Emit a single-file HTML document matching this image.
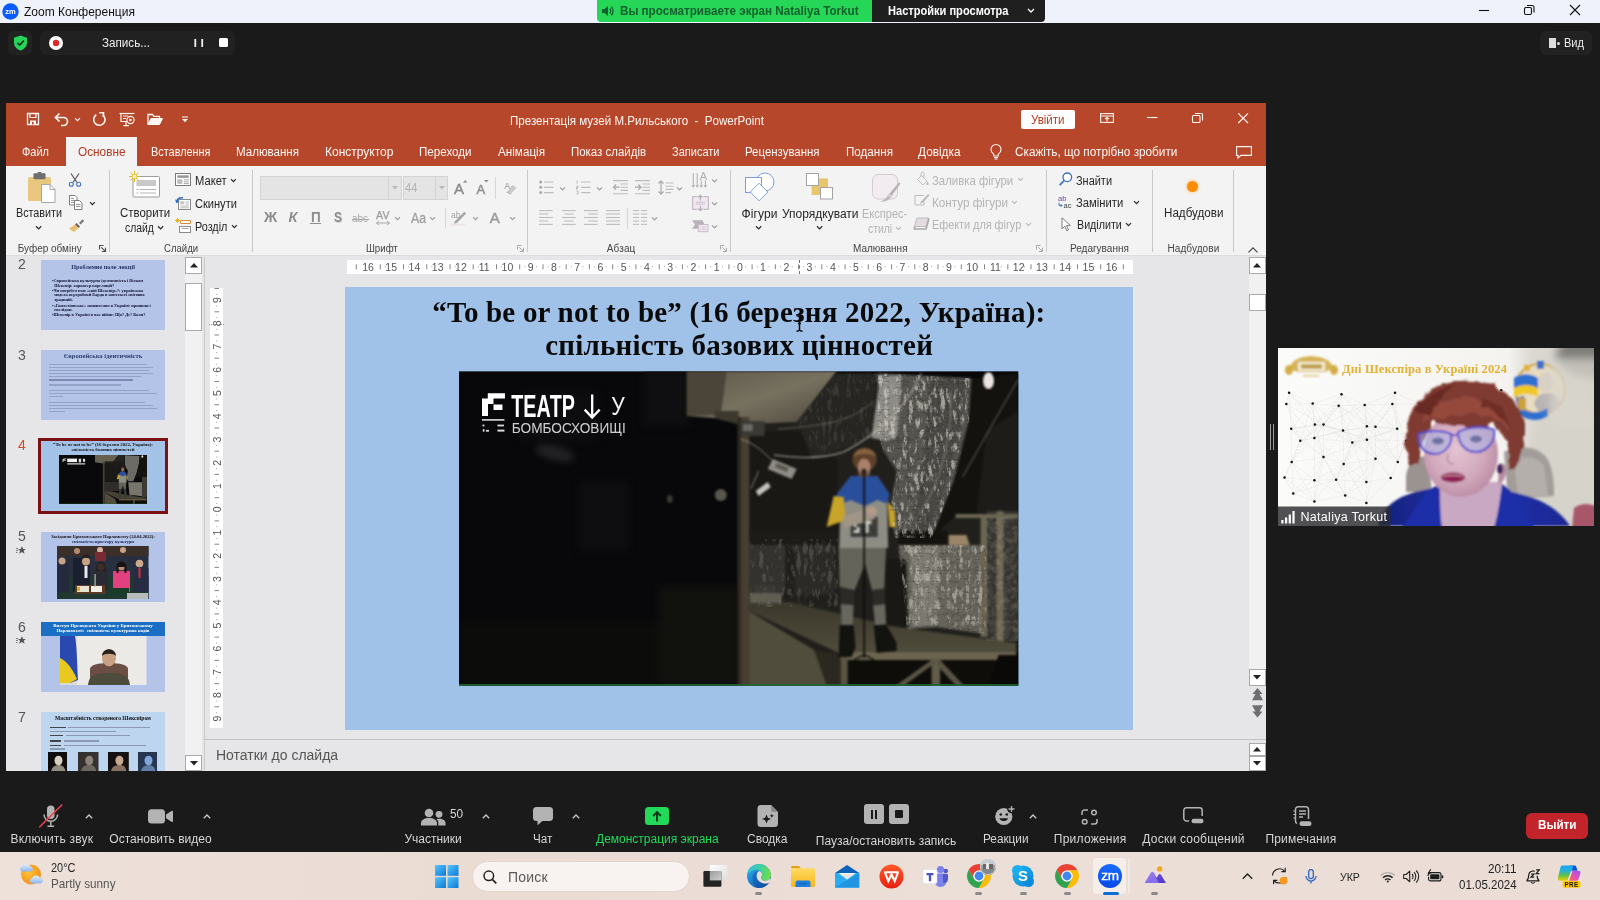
<!DOCTYPE html>
<html>
<head>
<meta charset="utf-8">
<style>
*{box-sizing:border-box;margin:0;padding:0}
html,body{width:1600px;height:900px;overflow:hidden;background:#1a1a1a;font-family:"Liberation Sans",sans-serif;}
.abs{position:absolute}
#root{position:absolute;left:0;top:0;width:1600px;height:900px;overflow:hidden;background:#1a1a1a;filter:opacity(1)}
.t{position:absolute;white-space:pre;line-height:1}
svg{overflow:visible}
</style>
</head>
<body>
<div id="root">

<!-- ZOOMTOP -->

<div class="abs" style="left:0px;top:0px;width:1600px;height:23px;background:#eff2fa;"></div>
<svg class="abs" style="left:2px;top:3px;" width="17" height="17" viewBox="0 0 17 17"><circle cx="8.5" cy="8.5" r="8.2" fill="#0b5cff"/><text x="8.5" y="11" font-family="Liberation Sans" font-weight="bold" font-size="7.5" fill="#fff" text-anchor="middle">zm</text></svg>
<div class="t" style="left:24.0px;top:5.6px;font-size:12px;color:#111;">Zoom Конференция</div>
<div class="abs" style="left:597px;top:0px;width:275px;height:22px;background:#26d657;border-radius:0 0 0 4px"></div>
<div class="abs" style="left:872px;top:0px;width:173px;height:22px;background:#1f1f1f;border-radius:0 0 4px 0"></div>
<svg class="abs" style="left:601px;top:5px;" width="14" height="12" viewBox="0 0 14 12"><path d="M1 4h2.500L7 1v10L3.500 8H1z" fill="#14602c"/><path d="M8.700 3.500a3.500 3.500 0 0 1 0 5M10.300 1.800a6 6 0 0 1 0 8.400" fill="none" stroke="#14602c" stroke-width="1.300"/></svg>
<div class="t" style="left:619.5px;top:4.9px;font-size:12px;color:#15602d;transform:scaleX(0.9697);transform-origin:0 50%;font-weight:bold;">Вы просматриваете экран Nataliya Torkut</div>
<div class="t" style="left:888.0px;top:4.9px;font-size:12px;color:#fff;transform:scaleX(0.9219);transform-origin:0 50%;font-weight:bold;">Настройки просмотра</div>
<svg class="abs" style="left:1027px;top:8px;" width="8" height="6" viewBox="0 0 8 6"><path d="M1 1l3 3 3-3" fill="none" stroke="#fff" stroke-width="1.300"/></svg>
<svg class="abs" style="left:1476px;top:3px;" width="110" height="16" viewBox="0 0 110 16"><path d="M3 7.500h10" stroke="#111" stroke-width="1.100" fill="none"/><rect x="48.500" y="4.500" width="7" height="7" rx="1.500" fill="none" stroke="#111" stroke-width="1.100"/><path d="M51 2.500h5a2 2 0 0 1 2 2v5" fill="none" stroke="#111" stroke-width="1.100"/><path d="M94 2l10 10M104 2l-10 10" stroke="#111" stroke-width="1.100" fill="none"/></svg>
<div class="abs" style="left:8px;top:31px;width:24px;height:24px;background:#222;border-radius:5px"></div>
<svg class="abs" style="left:13px;top:35px;" width="15" height="16" viewBox="0 0 15 16"><path d="M7.500 0.500L14 2.800v4.700c0 4-2.800 6.800-6.500 8C3.800 14.300 1 11.500 1 7.500V2.800z" fill="#27d45a"/><path d="M4.300 7.800l2.300 2.300 4.200-4.400" fill="none" stroke="#103a1c" stroke-width="1.700"/></svg>
<div class="abs" style="left:40px;top:31px;width:195px;height:24px;background:#212121;border-radius:6px"></div>
<svg class="abs" style="left:48px;top:35px;" width="16" height="16" viewBox="0 0 16 16"><circle cx="8" cy="8" r="7" fill="#fff"/><circle cx="8" cy="8" r="3.200" fill="#e02828"/></svg>
<div class="t" style="left:102.0px;top:37.1px;font-size:12px;color:#f0f0f0;transform:scaleX(0.9721);transform-origin:0 50%;">Запись...</div>
<svg class="abs" style="left:194px;top:39px;" width="10" height="8" viewBox="0 0 10 8"><rect x="0.400" y="0" width="1.800" height="8" fill="#f0f0f0"/><rect x="7.300" y="0" width="1.800" height="8" fill="#f0f0f0"/></svg>
<div class="abs" style="left:219px;top:38px;width:9px;height:9px;background:#fff;border-radius:1.500px"></div>
<div class="abs" style="left:1540px;top:31px;width:52px;height:24px;background:#222;border-radius:6px"></div>
<div class="abs" style="left:1549px;top:38px;width:7px;height:10px;background:#ddd;"></div>
<div class="abs" style="left:1557px;top:42px;width:3px;height:3px;background:#ddd;border-radius:50%"></div>
<div class="t" style="left:1564.0px;top:37.1px;font-size:12px;color:#ececec;transform:scaleX(0.9212);transform-origin:0 50%;">Вид</div>

<!-- PPHEAD -->

<div class="abs" style="left:6px;top:103px;width:1260px;height:668px;background:#e6e6e6;"></div>
<div class="abs" style="left:6px;top:103px;width:1260px;height:63px;background:#b7472a;"></div>
<svg class="abs" style="left:26px;top:112px;" width="14" height="14" viewBox="0 0 14 14"><path d="M1.500 1.500h11v11h-11z" fill="none" stroke="#fdf6f3" stroke-width="1.300"/><path d="M4 1.500v4h6v-4" fill="none" stroke="#fdf6f3" stroke-width="1.200"/><path d="M4 12.500v-4h6v4z" fill="#fdf6f3"/><rect x="6" y="9.800" width="1.500" height="2.700" fill="#b7472a"/></svg>
<svg class="abs" style="left:54px;top:112px;" width="16" height="15" viewBox="0 0 16 15"><path d="M1.500 5.500h8a4 4 0 0 1 0 8h-2.500" fill="none" stroke="#fdf6f3" stroke-width="1.700"/><path d="M5.500 1.500l-4 4 4 4" fill="none" stroke="#fdf6f3" stroke-width="1.700"/></svg>
<svg class="abs" style="left:74.0px;top:117.0px;" width="7.0" height="5.0" viewBox="0 0 7.0 5.0"><path d="M1 1.2l2.5 2.5 2.5-2.5" fill="none" stroke="#fdf6f3" stroke-width="1.1"/></svg>
<svg class="abs" style="left:92px;top:112px;" width="15" height="15" viewBox="0 0 15 15"><path d="M4.300 2.800a5.700 5.700 0 1 0 6.400 0.200" fill="none" stroke="#fdf6f3" stroke-width="1.600"/><path d="M7.200 0.800h4.300v4.300" fill="none" stroke="#fdf6f3" stroke-width="1.600"/></svg>
<svg class="abs" style="left:119px;top:112px;" width="17" height="15" viewBox="0 0 17 15"><path d="M0.500 1.500h15" stroke="#fdf6f3" stroke-width="1.200"/><path d="M2 1.500v8h6" fill="none" stroke="#fdf6f3" stroke-width="1.200"/><path d="M4 4h5M4 6.500h3" stroke="#fdf6f3" stroke-width="1"/><circle cx="11.500" cy="8" r="3.600" fill="none" stroke="#fdf6f3" stroke-width="1.100"/><path d="M10.400 6.200v3.600l3-1.800z" fill="#fdf6f3"/><path d="M7 10v3M4.500 13.700h5.500" stroke="#fdf6f3" stroke-width="1.200"/></svg>
<svg class="abs" style="left:147px;top:112px;" width="17" height="14" viewBox="0 0 17 14"><path d="M1 12.500v-10h4.500l1.500 1.800h5.500v2.200" fill="none" stroke="#fdf6f3" stroke-width="1.300"/><path d="M1 12.500l3-6h11.500l-3 6z" fill="#fdf6f3" stroke="#fdf6f3" stroke-width="1" stroke-linejoin="round"/></svg>
<svg class="abs" style="left:181px;top:116px;" width="8" height="7" viewBox="0 0 8 7"><path d="M1 1h6" stroke="#fdf6f3" stroke-width="1.100"/><path d="M1 3h6l-3 3.200z" fill="#fdf6f3"/></svg>
<div class="t" style="left:509.5px;top:114.6px;font-size:12px;color:#fdf6f3;transform:scaleX(0.9645);transform-origin:0 50%;">Презентація музей М.Рильського  -  PowerPoint</div>
<div class="abs" style="left:1021px;top:110px;width:54px;height:19px;background:#fff;border-radius:2px"></div>
<div class="t" style="left:1031.0px;top:114.1px;font-size:12px;color:#b23c22;transform:scaleX(0.9601);transform-origin:0 50%;">Увійти</div>
<svg class="abs" style="left:1100px;top:113px;" width="14" height="10" viewBox="0 0 14 10"><rect x="0.600" y="0.600" width="12.800" height="8.800" fill="none" stroke="#fdf6f3" stroke-width="1.100"/><path d="M0.600 3h12.800" stroke="#fdf6f3" stroke-width="1"/><path d="M7 8.500v-4M5 6.200l2-2 2 2" fill="none" stroke="#fdf6f3" stroke-width="1.100"/></svg>
<svg class="abs" style="left:1146px;top:112px;" width="104" height="12" viewBox="0 0 104 12"><path d="M1 5.500h10.500" stroke="#fdf6f3" stroke-width="1.100"/><rect x="46.500" y="3.500" width="7.500" height="7" rx="1" fill="none" stroke="#fdf6f3" stroke-width="1.100"/><path d="M49 1.500h6.500a1 1 0 0 1 1 1v6" fill="none" stroke="#fdf6f3" stroke-width="1.100"/><path d="M92.300 1.300l9.700 9.700M102 1.300l-9.700 9.700" stroke="#fdf6f3" stroke-width="1.200"/></svg>
<div class="abs" style="left:66px;top:137px;width:71px;height:29px;background:#f3f3f3;"></div>
<div class="t" style="left:21.5px;top:146.0px;font-size:12px;color:#fdf6f3;transform:scaleX(0.9152);transform-origin:0 50%;">Файл</div>
<div class="t" style="left:77.5px;top:146.0px;font-size:12px;color:#b23c22;transform:scaleX(0.9832);transform-origin:0 50%;">Основне</div>
<div class="t" style="left:150.5px;top:146.0px;font-size:12px;color:#fdf6f3;transform:scaleX(0.9075);transform-origin:0 50%;">Вставлення</div>
<div class="t" style="left:236.0px;top:146.0px;font-size:12px;color:#fdf6f3;transform:scaleX(0.9622);transform-origin:0 50%;">Малювання</div>
<div class="t" style="left:325.0px;top:146.0px;font-size:12px;color:#fdf6f3;">Конструктор</div>
<div class="t" style="left:419.0px;top:146.0px;font-size:12px;color:#fdf6f3;transform:scaleX(0.9657);transform-origin:0 50%;">Переходи</div>
<div class="t" style="left:497.5px;top:146.0px;font-size:12px;color:#fdf6f3;transform:scaleX(0.9739);transform-origin:0 50%;">Анімація</div>
<div class="t" style="left:570.5px;top:146.0px;font-size:12px;color:#fdf6f3;transform:scaleX(0.9541);transform-origin:0 50%;">Показ слайдів</div>
<div class="t" style="left:671.5px;top:146.0px;font-size:12px;color:#fdf6f3;transform:scaleX(0.9182);transform-origin:0 50%;">Записати</div>
<div class="t" style="left:745.0px;top:146.0px;font-size:12px;color:#fdf6f3;transform:scaleX(0.9524);transform-origin:0 50%;">Рецензування</div>
<div class="t" style="left:845.5px;top:146.0px;font-size:12px;color:#fdf6f3;transform:scaleX(0.9698);transform-origin:0 50%;">Подання</div>
<div class="t" style="left:918.0px;top:146.0px;font-size:12px;color:#fdf6f3;transform:scaleX(0.9845);transform-origin:0 50%;">Довідка</div>
<div class="t" style="left:1014.8px;top:146.0px;font-size:12px;color:#fdf6f3;transform:scaleX(0.9807);transform-origin:0 50%;">Скажіть, що потрібно зробити</div>
<svg class="abs" style="left:990px;top:143.5px;" width="12" height="16" viewBox="0 0 12 16"><path d="M3.800 10.200c-1.500-1-2.800-2.600-2.800-4.700a5 5 0 0 1 10 0c0 2.100-1.300 3.700-2.800 4.700v1.800h-4.400z" fill="none" stroke="#fdf6f3" stroke-width="1.100"/><path d="M4 13.500h4M4.500 15h3" stroke="#fdf6f3" stroke-width="1"/></svg>
<svg class="abs" style="left:1236px;top:145.5px;" width="16" height="13" viewBox="0 0 16 13"><path d="M0.600 0.600h14.800v8.800h-10.400l-3 2.600v-2.600h-1.400z" fill="none" stroke="#fdf6f3" stroke-width="1.100"/></svg>

<!-- RIBBON -->

<div class="abs" style="left:6px;top:166px;width:1260px;height:90px;background:#f3f3f3;"></div>
<div class="abs" style="left:6px;top:255px;width:1260px;height:1px;background:#dcdcdc;"></div>
<div class="abs" style="left:109px;top:170px;width:1px;height:82px;background:#c8c8c8;"></div>
<div class="abs" style="left:252px;top:170px;width:1px;height:82px;background:#c8c8c8;"></div>
<div class="abs" style="left:527px;top:170px;width:1px;height:82px;background:#c8c8c8;"></div>
<div class="abs" style="left:730px;top:170px;width:1px;height:82px;background:#c8c8c8;"></div>
<div class="abs" style="left:1046px;top:170px;width:1px;height:82px;background:#c8c8c8;"></div>
<div class="abs" style="left:1152px;top:170px;width:1px;height:82px;background:#c8c8c8;"></div>
<div class="abs" style="left:1233px;top:170px;width:1px;height:82px;background:#c8c8c8;"></div>
<svg class="abs" style="left:27px;top:172px;" width="29" height="32" viewBox="0 0 29 32"><rect x="1" y="5" width="23" height="24" rx="1.500" fill="#e9c77f"/><rect x="6.500" y="1.200" width="12" height="6" rx="1" fill="#6e6e6e"/><rect x="10.500" y="0" width="4" height="3" rx="1" fill="#6e6e6e"/><path d="M14.500 12.500h8.500l5 5v13h-13.500z" fill="#fff" stroke="#a8a8a8" stroke-width="1"/><path d="M23 12.500v5h5" fill="none" stroke="#a8a8a8" stroke-width="1"/></svg>
<div class="t" style="left:16.2px;top:207.1px;font-size:12px;color:#262626;transform:scaleX(0.8964);transform-origin:0 50%;">Вставити</div>
<svg class="abs" style="left:35.199999999999996px;top:225.4px;" width="7.2" height="5.2" viewBox="0 0 7.2 5.2"><path d="M1 1.3l2.6 2.6 2.6-2.6" fill="none" stroke="#262626" stroke-width="1.2"/></svg>
<svg class="abs" style="left:68px;top:173px;" width="14" height="14" viewBox="0 0 14 14"><path d="M3 0.500l6 9M11 0.500l-6 9" stroke="#555" stroke-width="1.200" fill="none"/><circle cx="3.300" cy="11.300" r="2" fill="none" stroke="#3f73c4" stroke-width="1.100"/><circle cx="10.700" cy="11.300" r="2" fill="none" stroke="#3f73c4" stroke-width="1.100"/></svg>
<svg class="abs" style="left:69px;top:195px;" width="14" height="15" viewBox="0 0 14 15"><path d="M0.500 0.500h5.500l2 2v7.500h-7.500z" fill="#fff" stroke="#7d7d7d" stroke-width="1"/><path d="M2 3.500h3M2 5.500h4M2 7.500h4" stroke="#7d7d7d" stroke-width="0.800"/><path d="M5.500 5.500h5l2.500 2.500v6.500h-7.500z" fill="#fff" stroke="#7d7d7d" stroke-width="1"/><path d="M7 9.500h4.500M7 11.500h4.500" stroke="#7d7d7d" stroke-width="0.800"/></svg>
<svg class="abs" style="left:89.3px;top:201.1px;" width="6.8" height="4.8" viewBox="0 0 6.8 4.8"><path d="M1 1.2l2.4 2.4 2.4-2.4" fill="none" stroke="#262626" stroke-width="1.2"/></svg>
<svg class="abs" style="left:69px;top:219px;" width="15" height="13" viewBox="0 0 15 13"><path d="M10 4l3.500-3.800 1.700 1.700-3.600 3.700z" fill="#7a7a7a"/><path d="M7.500 4l3.500 3.500-1.500 1.500-3.500-3.500z" fill="#6a5866"/><path d="M6 5.500l3.500 3.500-4.700 4-4.800-3.200z" fill="#e5bf6b"/></svg>
<div class="t" style="left:17.7px;top:243.5px;font-size:10px;color:#444;">Буфер обміну</div>
<svg class="abs" style="left:98.5px;top:245px;" width="7" height="7" viewBox="0 0 7 7"><path d="M0.500 4.500v-4h4" fill="none" stroke="#4a4a4a" stroke-width="1.1"/><path d="M2.300 2.300l4 4M6.500 2.800v3.700h-3.700" fill="none" stroke="#4a4a4a" stroke-width="1.1"/></svg>
<svg class="abs" style="left:130px;top:171px;" width="31" height="28" viewBox="0 0 31 28"><rect x="3" y="5.500" width="26.500" height="20.500" rx="1" fill="#fff" stroke="#9c9c9c" stroke-width="1"/><rect x="6.500" y="9" width="19.500" height="6" fill="#c9c9c9"/><path d="M6.500 18.500h2M10 18.500h16M6.500 22h2M10 22h16" stroke="#b5b5b5" stroke-width="1"/><g stroke="#e3b81f" stroke-width="1"><path d="M4.500 0v11M-1 5.500h11M0.600 1.600l7.800 7.800M8.400 1.600l-7.800 7.800"/></g><circle cx="4.500" cy="5.500" r="2.300" fill="#fff6c0" stroke="#e3b81f" stroke-width="0.700"/></svg>
<div class="t" style="left:119.8px;top:207.1px;font-size:12px;color:#262626;transform:scaleX(0.9534);transform-origin:0 50%;">Створити</div>
<div class="t" style="left:124.8px;top:222.4px;font-size:12px;color:#262626;transform:scaleX(0.8628);transform-origin:0 50%;">слайд</div>
<svg class="abs" style="left:157.4px;top:225.4px;" width="7.2" height="5.2" viewBox="0 0 7.2 5.2"><path d="M1 1.3l2.6 2.6 2.6-2.6" fill="none" stroke="#262626" stroke-width="1.2"/></svg>
<svg class="abs" style="left:175px;top:173px;" width="16" height="13" viewBox="0 0 16 13"><rect x="0.500" y="0.500" width="15" height="12" fill="#fff" stroke="#7a7a7a" stroke-width="1"/><rect x="2.300" y="2.300" width="11.400" height="2.600" fill="#9a9a9a"/><rect x="2.300" y="6.300" width="5" height="4.600" fill="#bdbdbd"/><path d="M8.800 6.800h5M8.800 8.800h5M8.800 10.600h5" stroke="#9a9a9a" stroke-width="0.900"/></svg>
<div class="t" style="left:194.6px;top:175.4px;font-size:12px;color:#262626;transform:scaleX(0.9334);transform-origin:0 50%;">Макет</div>
<svg class="abs" style="left:229.9px;top:178.2px;" width="6.8" height="4.8" viewBox="0 0 6.8 4.8"><path d="M1 1.2l2.4 2.4 2.4-2.4" fill="none" stroke="#262626" stroke-width="1.2"/></svg>
<svg class="abs" style="left:175px;top:196px;" width="16" height="14" viewBox="0 0 16 14"><rect x="3.500" y="3.500" width="12" height="10" fill="#fff" stroke="#8a8a8a" stroke-width="1"/><rect x="5.300" y="5.300" width="4" height="3" fill="#c4c4c4"/><path d="M10.500 6h3.500M10.500 8h3.500M5.300 10h8.500M5.300 11.800h8.500" stroke="#a5a5a5" stroke-width="0.800"/><path d="M1.500 6.500c0-3.500 3-5.500 6.500-4.500" fill="none" stroke="#2f6fc6" stroke-width="1.600"/><path d="M0 3.500l1.600 3.800 3.200-2.300z" fill="#2f6fc6"/></svg>
<div class="t" style="left:194.6px;top:198.1px;font-size:12px;color:#262626;transform:scaleX(0.9220);transform-origin:0 50%;">Скинути</div>
<svg class="abs" style="left:175px;top:218px;" width="16" height="15" viewBox="0 0 16 15"><g stroke="#e7b416" stroke-width="0.900"><path d="M2.500 0v5M0 2.500h5M0.800 0.800l3.400 3.400M4.200 0.800l-3.400 3.400"/></g><rect x="5.500" y="2.500" width="10" height="3" rx="0.500" fill="#fff" stroke="#d98a3d" stroke-width="1"/><rect x="4.500" y="8.500" width="11" height="6" fill="#fff" stroke="#8a8a8a" stroke-width="1"/><path d="M6.500 10.500h7" stroke="#a5a5a5" stroke-width="1"/></svg>
<div class="t" style="left:194.6px;top:221.3px;font-size:12px;color:#262626;transform:scaleX(0.9019);transform-origin:0 50%;">Розділ</div>
<svg class="abs" style="left:231.0px;top:224.2px;" width="6.8" height="4.8" viewBox="0 0 6.8 4.8"><path d="M1 1.2l2.4 2.4 2.4-2.4" fill="none" stroke="#262626" stroke-width="1.2"/></svg>
<div class="t" style="left:163.8px;top:243.5px;font-size:10px;color:#444;transform:scaleX(0.9572);transform-origin:0 50%;">Слайди</div>
<div class="abs" style="left:260px;top:176px;width:142px;height:24px;background:#e4e4e4;border:1px solid #d3d3d3"></div>
<div class="abs" style="left:388px;top:177px;width:1px;height:22px;background:#d3d3d3;"></div>
<svg class="abs" style="left:392px;top:186px;" width="6" height="4" viewBox="0 0 6 4"><path d="M0 0h6l-3 3.500z" fill="#b8b8b8"/></svg>
<div class="abs" style="left:403px;top:176px;width:45px;height:24px;background:#e4e4e4;border:1px solid #d3d3d3"></div>
<div class="abs" style="left:435px;top:177px;width:1px;height:22px;background:#d3d3d3;"></div>
<svg class="abs" style="left:438.5px;top:186px;" width="6" height="4" viewBox="0 0 6 4"><path d="M0 0h6l-3 3.500z" fill="#b8b8b8"/></svg>
<div class="t" style="left:405.0px;top:182.4px;font-size:12px;color:#b3b3b3;transform:scaleX(0.9290);transform-origin:0 50%;">44</div>
<div class="t" style="left:454.0px;top:180.7px;font-size:15px;color:#8c8c8c;letter-spacing:0.49px;-webkit-text-stroke:0.45px #8c8c8c;">A</div>
<svg class="abs" style="left:462.8px;top:180.3px;" width="4.4" height="2.6" viewBox="0 0 4.4 2.6"><path d="M0 2.600l2.200-2.600 2.200 2.600z" fill="#8c8c8c"/></svg>
<div class="t" style="left:476.5px;top:182.7px;font-size:13px;color:#8c8c8c;letter-spacing:0.33px;-webkit-text-stroke:0.45px #8c8c8c;">A</div>
<svg class="abs" style="left:484.3px;top:180px;" width="4.6" height="2.6" viewBox="0 0 4.6 2.6"><path d="M0 0h4.600l-2.300 2.600z" fill="#8c8c8c"/></svg>
<div class="abs" style="left:495px;top:177px;width:1px;height:22px;background:#d6d6d6;"></div>
<svg class="abs" style="left:504px;top:179.5px;" width="14" height="15" viewBox="0 0 14 15"><text x="0" y="8.800" font-family="Liberation Sans" font-weight="bold" font-size="9" fill="#b4b0b4">A</text><path d="M8.300 5l4.300 2.800-5.400 5.800-4-2.100z" fill="#cbc7cb"/><path d="M3.200 11.500l4 2.100-0.800 0.900-4-2.100z" fill="#b4b0b4"/></svg>
<div class="t" style="left:264.0px;top:210.2px;font-size:14.5px;color:#8c8c8c;letter-spacing:1.09px;font-weight:bold;">Ж</div>
<div class="t" style="left:288.5px;top:210.2px;font-size:14.5px;color:#8c8c8c;letter-spacing:0.99px;font-weight:bold;font-style:italic;">К</div>
<div class="t" style="left:310.6px;top:210.0px;font-size:14px;color:#8c8c8c;transform:scaleX(0.9640);transform-origin:0 50%;font-weight:bold;">П</div>
<div class="abs" style="left:310.3px;top:222.5px;width:10.5px;height:1.3px;background:#8c8c8c;"></div>
<div class="t" style="left:334.0px;top:210.2px;font-size:14.5px;color:#8c8c8c;transform:scaleX(0.8271);transform-origin:0 50%;font-weight:bold;text-shadow:1px 1px 1px #cfcfcf;">S</div>
<div class="t" style="left:352.0px;top:213.1px;font-size:11px;color:#a8a8a8;transform:scaleX(0.8965);transform-origin:0 50%;">abc</div>
<div class="abs" style="left:351.5px;top:219px;width:17px;height:1px;background:#a8a8a8;"></div>
<div class="t" style="left:376.0px;top:210.3px;font-size:10.5px;color:#9a9a9a;letter-spacing:0.17px;-webkit-text-stroke:0.250px #9a9a9a;">AV</div>
<svg class="abs" style="left:375.5px;top:220.5px;" width="14" height="4" viewBox="0 0 14 4"><path d="M0.500 2h13M3 0l-2.500 2 2.500 2M11 0l2.500 2-2.500 2" fill="none" stroke="#a0a0a0" stroke-width="0.900"/></svg>
<svg class="abs" style="left:393.8px;top:215.5px;" width="7.0" height="5.0" viewBox="0 0 7.0 5.0"><path d="M1 1.2l2.5 2.5 2.5-2.5" fill="none" stroke="#9c9c9c" stroke-width="1.15"/></svg>
<div class="t" style="left:411.0px;top:210.7px;font-size:14px;color:#a0a0a0;transform:scaleX(0.8759);transform-origin:0 50%;-webkit-text-stroke:0.300px #a0a0a0;">Aa</div>
<svg class="abs" style="left:429.1px;top:215.5px;" width="7.0" height="5.0" viewBox="0 0 7.0 5.0"><path d="M1 1.2l2.5 2.5 2.5-2.5" fill="none" stroke="#9c9c9c" stroke-width="1.15"/></svg>
<div class="abs" style="left:444.5px;top:208px;width:1px;height:20px;background:#d6d6d6;"></div>
<svg class="abs" style="left:450.5px;top:210.5px;" width="16" height="15" viewBox="0 0 16 15"><text x="0" y="6.800" font-family="Liberation Sans" font-size="8.500" fill="#a6a2a6">ab</text><path d="M13.300 0.800l1.900 1.700-9.300 9.600-2.900 1 0.700-2.700z" fill="#aaa6aa"/><path d="M0 13.800h14" stroke="#ede3eb" stroke-width="1.800"/></svg>
<svg class="abs" style="left:471.5px;top:215.5px;" width="7.0" height="5.0" viewBox="0 0 7.0 5.0"><path d="M1 1.2l2.5 2.5 2.5-2.5" fill="none" stroke="#9c9c9c" stroke-width="1.15"/></svg>
<div class="t" style="left:489.7px;top:209.7px;font-size:15px;color:#999;-webkit-text-stroke:0.450px #999;">A</div>
<svg class="abs" style="left:508.70000000000005px;top:215.5px;" width="7.0" height="5.0" viewBox="0 0 7.0 5.0"><path d="M1 1.2l2.5 2.5 2.5-2.5" fill="none" stroke="#9c9c9c" stroke-width="1.15"/></svg>
<div class="t" style="left:365.8px;top:243.5px;font-size:10px;color:#444;transform:scaleX(0.9665);transform-origin:0 50%;">Шрифт</div>
<svg class="abs" style="left:516.5px;top:245px;" width="7" height="7" viewBox="0 0 7 7"><path d="M0.500 4.500v-4h4" fill="none" stroke="#a8a8a8" stroke-width="1"/><path d="M2.300 2.300l4 4M6.500 2.800v3.700h-3.700" fill="none" stroke="#a8a8a8" stroke-width="1"/></svg>
<svg class="abs" style="left:538.5px;top:180px;" width="15" height="15" viewBox="0 0 15 15"><circle cx="1.700" cy="2" r="1.500" fill="#aaa"/><circle cx="1.700" cy="7.300" r="1.500" fill="#aaa"/><circle cx="1.700" cy="12.600" r="1.500" fill="#aaa"/><path d="M5 2h9.500M5 7.300h9.500M5 12.600h9.500" stroke="#bdbdbd" stroke-width="1.200"/></svg>
<svg class="abs" style="left:559.4px;top:186.0px;" width="7.2" height="5.2" viewBox="0 0 7.2 5.2"><path d="M1 1.3l2.6 2.6 2.6-2.6" fill="none" stroke="#9c9c9c" stroke-width="1.15"/></svg>
<svg class="abs" style="left:575.5px;top:180px;" width="15" height="15" viewBox="0 0 15 15"><path d="M1.200 0.500v3M0.500 6h1.500v1.500h-1.500v1.500h1.500M0.500 11h1.500v3h-1.500" fill="none" stroke="#aaa" stroke-width="0.800"/><path d="M5 2h9.500M5 7.300h9.500M5 12.600h9.500" stroke="#bdbdbd" stroke-width="1.200"/></svg>
<svg class="abs" style="left:596.1999999999999px;top:186.0px;" width="7.2" height="5.2" viewBox="0 0 7.2 5.2"><path d="M1 1.3l2.6 2.6 2.6-2.6" fill="none" stroke="#9c9c9c" stroke-width="1.15"/></svg>
<svg class="abs" style="left:613px;top:179.5px;" width="15" height="15" viewBox="0 0 15 15"><path d="M0 0.600h15M7.500 4h7.500M7.500 7.200h7.500M7.500 10.400h7.500M0 13.800h15" stroke="#bdbdbd" stroke-width="1.100"/><path d="M6.500 7.200h-6M3.200 4.500l-2.700 2.700 2.700 2.700" fill="none" stroke="#aaa" stroke-width="1.300"/></svg>
<svg class="abs" style="left:635px;top:179.5px;" width="15" height="15" viewBox="0 0 15 15"><path d="M0 0.600h15M7.500 4h7.500M7.500 7.200h7.500M7.500 10.400h7.500M0 13.800h15" stroke="#bdbdbd" stroke-width="1.100"/><path d="M0 7.200h6M3.300 4.500l2.700 2.700-2.700 2.700" fill="none" stroke="#aaa" stroke-width="1.300"/></svg>
<svg class="abs" style="left:657.5px;top:180px;" width="16" height="15" viewBox="0 0 16 15"><path d="M3 1v13M0.500 3.500l2.500-2.700 2.500 2.700M0.500 11.500l2.500 2.700 2.500-2.700" fill="none" stroke="#aaa" stroke-width="1.200"/><path d="M7.500 3h8M7.500 6.200h8M7.500 9.400h8M7.500 12.600h5.500" stroke="#bdbdbd" stroke-width="1.100"/></svg>
<svg class="abs" style="left:676.4px;top:186.0px;" width="7.2" height="5.2" viewBox="0 0 7.2 5.2"><path d="M1 1.3l2.6 2.6 2.6-2.6" fill="none" stroke="#9c9c9c" stroke-width="1.15"/></svg>
<svg class="abs" style="left:692px;top:171.5px;" width="16" height="16" viewBox="0 0 16 16"><g stroke="#b3abb3" stroke-width="1" fill="none"><path d="M1.300 1v14M5.200 1v14M9.300 8.500v6.500M13.400 8.500v6.500"/><path d="M0 13l1.300 2.300 1.300-2.300M3.900 13l1.300 2.300 1.300-2.300M8 13l1.300 2.300 1.300-2.300M12.100 13l1.300 2.300 1.300-2.300" stroke-width="0.900"/></g><text x="7.700" y="8.200" font-family="Liberation Sans" font-size="11" fill="#b3abb3">A</text></svg>
<svg class="abs" style="left:710.6px;top:177.8px;" width="7.2" height="5.2" viewBox="0 0 7.2 5.2"><path d="M1 1.3l2.6 2.6 2.6-2.6" fill="none" stroke="#9c9c9c" stroke-width="1.15"/></svg>
<svg class="abs" style="left:691.5px;top:194.5px;" width="17" height="16" viewBox="0 0 17 16"><path d="M5.500 1.700h-4.800v12.600h4.800M11.500 1.700h4.800v12.600h-4.800" fill="#f1e9f0" stroke="#c4b8c3" stroke-width="1"/><rect x="1.200" y="2.200" width="14.600" height="11.600" fill="#f1e9f0"/><path d="M5.500 1.700h-4.800v12.600h4.800M11.500 1.700h4.800v12.600h-4.800" fill="none" stroke="#c4b8c3" stroke-width="1"/><path d="M8.400 0.500v5M6.300 2.500l2.100-2.100 2.100 2.100M8.400 15.700v-5M6.300 13.500l2.100 2.200 2.100-2.200" fill="none" stroke="#b3abb3" stroke-width="1.100"/><path d="M3.700 7.200h9.300M3.700 9.100h9.300" stroke="#c4b8c3" stroke-width="0.800"/></svg>
<svg class="abs" style="left:710.6px;top:200.8px;" width="7.2" height="5.2" viewBox="0 0 7.2 5.2"><path d="M1 1.3l2.6 2.6 2.6-2.6" fill="none" stroke="#9c9c9c" stroke-width="1.15"/></svg>
<svg class="abs" style="left:692px;top:220px;" width="17" height="12.5" viewBox="0 0 17 12.5"><path d="M0 0.300h10.500l2 4.200-2 4.200h-10.500l3-4.200z" fill="#b9b2b9"/><rect x="6.300" y="4.500" width="9.700" height="7.200" fill="#f1e9f0" stroke="#c4b8c3" stroke-width="0.900"/><path d="M8 7h1M10 7h4.300M8 9.300h1M10 9.300h4.300" stroke="#c4b8c3" stroke-width="0.800"/></svg>
<svg class="abs" style="left:710.6px;top:223.70000000000002px;" width="7.2" height="5.2" viewBox="0 0 7.2 5.2"><path d="M1 1.3l2.6 2.6 2.6-2.6" fill="none" stroke="#9c9c9c" stroke-width="1.15"/></svg>
<svg class="abs" style="left:539.2px;top:210px;" width="13.7" height="15" viewBox="0 0 13.7 15"><path d="M0.0 0.6h13.7" stroke="#bdbdbd" stroke-width="1.1"/><path d="M0.0 4.0h9.3" stroke="#bdbdbd" stroke-width="1.1"/><path d="M0.0 7.5h13.7" stroke="#bdbdbd" stroke-width="1.1"/><path d="M0.0 11.0h9.3" stroke="#bdbdbd" stroke-width="1.1"/><path d="M0.0 14.4h13.7" stroke="#bdbdbd" stroke-width="1.1"/></svg>
<svg class="abs" style="left:561.5px;top:210px;" width="13.7" height="15" viewBox="0 0 13.7 15"><path d="M0.0 0.6h13.7" stroke="#bdbdbd" stroke-width="1.1"/><path d="M2.2 4.0h9.3" stroke="#bdbdbd" stroke-width="1.1"/><path d="M0.0 7.5h13.7" stroke="#bdbdbd" stroke-width="1.1"/><path d="M2.2 11.0h9.3" stroke="#bdbdbd" stroke-width="1.1"/><path d="M0.0 14.4h13.7" stroke="#bdbdbd" stroke-width="1.1"/></svg>
<svg class="abs" style="left:583.8px;top:210px;" width="13.7" height="15" viewBox="0 0 13.7 15"><path d="M0.0 0.6h13.7" stroke="#bdbdbd" stroke-width="1.1"/><path d="M4.4 4.0h9.3" stroke="#bdbdbd" stroke-width="1.1"/><path d="M0.0 7.5h13.7" stroke="#bdbdbd" stroke-width="1.1"/><path d="M4.4 11.0h9.3" stroke="#bdbdbd" stroke-width="1.1"/><path d="M0.0 14.4h13.7" stroke="#bdbdbd" stroke-width="1.1"/></svg>
<svg class="abs" style="left:606px;top:210px;" width="14" height="15" viewBox="0 0 14 15"><path d="M0.0 0.6h14.0" stroke="#bdbdbd" stroke-width="1.1"/><path d="M0.0 4.0h14.0" stroke="#bdbdbd" stroke-width="1.1"/><path d="M0.0 7.5h14.0" stroke="#bdbdbd" stroke-width="1.1"/><path d="M0.0 11.0h14.0" stroke="#bdbdbd" stroke-width="1.1"/><path d="M0.0 14.4h14.0" stroke="#bdbdbd" stroke-width="1.1"/></svg>
<div class="abs" style="left:626.5px;top:208px;width:1px;height:21px;background:#d6d6d6;"></div>
<svg class="abs" style="left:632.7px;top:210px;" width="6.2" height="15" viewBox="0 0 6.2 15"><path d="M0.0 0.6h6.2" stroke="#bdbdbd" stroke-width="1.1"/><path d="M0.0 4.0h6.2" stroke="#bdbdbd" stroke-width="1.1"/><path d="M0.0 7.5h6.2" stroke="#bdbdbd" stroke-width="1.1"/><path d="M0.0 11.0h6.2" stroke="#bdbdbd" stroke-width="1.1"/><path d="M0.0 14.4h6.2" stroke="#bdbdbd" stroke-width="1.1"/></svg>
<svg class="abs" style="left:640.5px;top:210px;" width="6.2" height="15" viewBox="0 0 6.2 15"><path d="M0.0 0.6h6.2" stroke="#bdbdbd" stroke-width="1.1"/><path d="M0.0 4.0h6.2" stroke="#bdbdbd" stroke-width="1.1"/><path d="M0.0 7.5h6.2" stroke="#bdbdbd" stroke-width="1.1"/><path d="M0.0 11.0h6.2" stroke="#bdbdbd" stroke-width="1.1"/><path d="M0.0 14.4h6.2" stroke="#bdbdbd" stroke-width="1.1"/></svg>
<svg class="abs" style="left:650.6999999999999px;top:215.9px;" width="7.2" height="5.2" viewBox="0 0 7.2 5.2"><path d="M1 1.3l2.6 2.6 2.6-2.6" fill="none" stroke="#9c9c9c" stroke-width="1.15"/></svg>
<div class="t" style="left:606.8px;top:243.5px;font-size:10px;color:#444;letter-spacing:0.11px;">Абзац</div>
<svg class="abs" style="left:719.8px;top:245px;" width="7" height="7" viewBox="0 0 7 7"><path d="M0.500 4.500v-4h4" fill="none" stroke="#a8a8a8" stroke-width="1"/><path d="M2.300 2.300l4 4M6.500 2.800v3.700h-3.700" fill="none" stroke="#a8a8a8" stroke-width="1"/></svg>
<svg class="abs" style="left:744px;top:171px;" width="32" height="32" viewBox="0 0 32 32"><circle cx="21" cy="11" r="9" fill="#fff" stroke="#6b98d6" stroke-width="0.900"/><rect x="1.500" y="6.500" width="16" height="15" fill="#fff" stroke="#6b98d6" stroke-width="0.900"/><path d="M15 12.200l8.800 8.800-8.800 8.800-8.800-8.800z" fill="#fff" stroke="#6b98d6" stroke-width="0.900"/></svg>
<div class="t" style="left:741.6px;top:207.6px;font-size:12px;color:#262626;letter-spacing:0.08px;">Фігури</div>
<svg class="abs" style="left:755.4px;top:225.4px;" width="7.2" height="5.2" viewBox="0 0 7.2 5.2"><path d="M1 1.3l2.6 2.6 2.6-2.6" fill="none" stroke="#262626" stroke-width="1.2"/></svg>
<svg class="abs" style="left:805px;top:173px;" width="29" height="27" viewBox="0 0 29 27"><rect x="6.600" y="5.400" width="16.400" height="16.600" fill="#e9c66e"/><rect x="1.500" y="0.500" width="12" height="12" fill="#fff" stroke="#a2a2a2" stroke-width="1"/><rect x="15.500" y="14.500" width="12" height="11.500" fill="#fff" stroke="#a2a2a2" stroke-width="1"/></svg>
<div class="t" style="left:782.0px;top:207.6px;font-size:12px;color:#262626;">Упорядкувати</div>
<svg class="abs" style="left:815.8px;top:225.4px;" width="7.2" height="5.2" viewBox="0 0 7.2 5.2"><path d="M1 1.3l2.6 2.6 2.6-2.6" fill="none" stroke="#262626" stroke-width="1.2"/></svg>
<svg class="abs" style="left:872px;top:174px;" width="28" height="28" viewBox="0 0 28 28"><rect x="0.500" y="0.500" width="25" height="24.500" rx="5.500" fill="#f2ecf1" stroke="#d3cad2" stroke-width="1"/><path d="M27.200 8l1.300 1.400-8.700 12.200-2.300-1.800z" fill="#b7b1b7"/><path d="M17.500 19.800l2.300 1.800-1.600 2.200-2.400-1.900z" fill="#d8d2d8" stroke="#b7b1b7" stroke-width="0.600"/><path d="M15.800 21.900l2.400 1.900c-2.200 3.600-6 4-10.200 3.800c3.600-1 5.400-3 7.800-5.700z" fill="#bdb7bd"/></svg>
<div class="t" style="left:862.4px;top:207.6px;font-size:12px;color:#b4b4b4;transform:scaleX(0.9181);transform-origin:0 50%;">Експрес-</div>
<div class="t" style="left:867.6px;top:222.7px;font-size:12px;color:#b4b4b4;transform:scaleX(0.8612);transform-origin:0 50%;">стилі</div>
<svg class="abs" style="left:895.2px;top:225.9px;" width="6.8" height="4.8" viewBox="0 0 6.8 4.8"><path d="M1 1.2l2.4 2.4 2.4-2.4" fill="none" stroke="#b4b4b4" stroke-width="1.1"/></svg>
<svg class="abs" style="left:916px;top:172px;" width="13" height="13" viewBox="0 0 13 13"><path d="M5.500 3.500l5.500 5.500-4 4-5.500-5.500z" fill="none" stroke="#bdbdbd" stroke-width="1"/><path d="M5 4.500v-3a1.500 1.500 0 0 1 3 0v4" fill="none" stroke="#bdbdbd" stroke-width="0.900"/><path d="M11.500 9.500c0.800 1.200 1.200 1.800 1.200 2.400a1.200 1.200 0 0 1-2.400 0c0-0.600 0.400-1.200 1.200-2.400z" fill="#bdbdbd"/></svg>
<div class="t" style="left:932.4px;top:174.6px;font-size:12px;color:#b4b4b4;transform:scaleX(0.9477);transform-origin:0 50%;">Заливка фігури</div>
<svg class="abs" style="left:1016.6px;top:177.4px;" width="6.8" height="4.8" viewBox="0 0 6.8 4.8"><path d="M1 1.2l2.4 2.4 2.4-2.4" fill="none" stroke="#b4b4b4" stroke-width="1.1"/></svg>
<svg class="abs" style="left:913.5px;top:194px;" width="16" height="12" viewBox="0 0 16 12"><path d="M10 1.500h-9v9.500h9v-4" fill="none" stroke="#bdbdbd" stroke-width="1"/><path d="M14 0l1.500 1.500-7 7.500-2.500 1 1-2.500z" fill="#bdbdbd"/></svg>
<div class="t" style="left:932.4px;top:196.9px;font-size:12px;color:#b4b4b4;transform:scaleX(0.9749);transform-origin:0 50%;">Контур фігури</div>
<svg class="abs" style="left:1011.0px;top:200.0px;" width="6.8" height="4.8" viewBox="0 0 6.8 4.8"><path d="M1 1.2l2.4 2.4 2.4-2.4" fill="none" stroke="#b4b4b4" stroke-width="1.1"/></svg>
<svg class="abs" style="left:914px;top:217px;" width="16" height="14" viewBox="0 0 16 14"><path d="M3 1h11.500l-2.500 8.500h-11.500z" fill="#e4dbe3" stroke="#bdbdbd" stroke-width="1"/><path d="M0.500 9.500v2.500h11.500l2.500-8.500v-2.500" fill="none" stroke="#a9a9a9" stroke-width="1.600"/></svg>
<div class="t" style="left:932.4px;top:219.1px;font-size:12px;color:#b4b4b4;transform:scaleX(0.9032);transform-origin:0 50%;">Ефекти для фігур</div>
<svg class="abs" style="left:1024.6px;top:222.2px;" width="6.8" height="4.8" viewBox="0 0 6.8 4.8"><path d="M1 1.2l2.4 2.4 2.4-2.4" fill="none" stroke="#b4b4b4" stroke-width="1.1"/></svg>
<div class="t" style="left:853.0px;top:243.5px;font-size:10px;color:#444;">Малювання</div>
<svg class="abs" style="left:1035.5px;top:245px;" width="7" height="7" viewBox="0 0 7 7"><path d="M0.500 4.500v-4h4" fill="none" stroke="#a8a8a8" stroke-width="1"/><path d="M2.300 2.300l4 4M6.500 2.800v3.700h-3.700" fill="none" stroke="#a8a8a8" stroke-width="1"/></svg>
<svg class="abs" style="left:1058.5px;top:172px;" width="14" height="14" viewBox="0 0 14 14"><circle cx="8.300" cy="5.300" r="4.300" fill="#fff" stroke="#3c6fc4" stroke-width="1.300"/><path d="M5.200 8.500l-4.500 4.700" stroke="#3c6fc4" stroke-width="1.800" fill="none"/></svg>
<div class="t" style="left:1075.8px;top:174.6px;font-size:12px;color:#262626;transform:scaleX(0.9125);transform-origin:0 50%;">Знайти</div>
<svg class="abs" style="left:1058px;top:195px;" width="15" height="14" viewBox="0 0 15 14"><text x="0" y="5.500" font-family="Liberation Sans" font-size="7.500" fill="#6a4a9c">ab</text><text x="5.500" y="12.500" font-family="Liberation Sans" font-size="7.500" fill="#444">ac</text><path d="M1 7.500v3h3M2.500 9l1.500 1.500-1.500 1.500" fill="none" stroke="#3c6fc4" stroke-width="0.900"/></svg>
<div class="t" style="left:1075.8px;top:197.1px;font-size:12px;color:#262626;transform:scaleX(0.9371);transform-origin:0 50%;">Замінити</div>
<svg class="abs" style="left:1132.5px;top:200.1px;" width="7.0" height="5.0" viewBox="0 0 7.0 5.0"><path d="M1 1.2l2.5 2.5 2.5-2.5" fill="none" stroke="#262626" stroke-width="1.2"/></svg>
<svg class="abs" style="left:1060.5px;top:216.5px;" width="11" height="15" viewBox="0 0 11 15"><path d="M1 0.800v11l2.800-2.600 2 4.600 1.700-0.800-2-4.400 3.800-0.200z" fill="#fff" stroke="#6f6f6f" stroke-width="0.900" stroke-linejoin="round"/></svg>
<div class="t" style="left:1076.5px;top:218.9px;font-size:12px;color:#262626;transform:scaleX(0.8910);transform-origin:0 50%;">Виділити</div>
<svg class="abs" style="left:1125.1px;top:221.5px;" width="7.0" height="5.0" viewBox="0 0 7.0 5.0"><path d="M1 1.2l2.5 2.5 2.5-2.5" fill="none" stroke="#262626" stroke-width="1.2"/></svg>
<div class="t" style="left:1070.0px;top:243.7px;font-size:10px;color:#444;">Редагування</div>
<div class="abs" style="left:1186.5px;top:180.5px;width:11px;height:11px;background:#ff8c00;border-radius:50%;box-shadow:0 0 3px 1px rgba(255,170,60,0.45)"></div>
<div class="t" style="left:1163.6px;top:207.4px;font-size:12px;color:#262626;transform:scaleX(0.9689);transform-origin:0 50%;">Надбудови</div>
<div class="t" style="left:1167.5px;top:243.7px;font-size:10px;color:#444;letter-spacing:0.08px;">Надбудови</div>
<svg class="abs" style="left:1248px;top:246.5px;" width="10" height="6" viewBox="0 0 10 6"><path d="M0.500 5.300l4.500-4.500 4.500 4.500" fill="none" stroke="#444" stroke-width="1.200"/></svg>

<!-- PANE -->

<div class="abs" style="left:6px;top:256px;width:1260px;height:515px;background:#e6e6e8;"></div>
<div class="abs" style="left:185px;top:257px;width:17px;height:514px;background:#f1f1f1;"></div>
<div class="abs" style="left:204px;top:257px;width:1px;height:514px;background:#c9c9c9;"></div>
<div class="abs" style="left:185px;top:257px;width:17px;height:16.5px;background:#fff;border:1px solid #a9a9a9"></div>
<svg class="abs" style="left:189.5px;top:262.75px;" width="8" height="5" viewBox="0 0 8 5"><path d="M0 4.500l4-4.500 4 4.500z" fill="#222"/></svg>
<div class="abs" style="left:185px;top:283px;width:17px;height:47.5px;background:#fff;border:1px solid #a9a9a9"></div>
<div class="abs" style="left:185px;top:754.5px;width:17px;height:16px;background:#fff;border:1px solid #a9a9a9"></div>
<svg class="abs" style="left:189.5px;top:760.5px;" width="8" height="5" viewBox="0 0 8 5"><path d="M0 0h8l-4 4.500z" fill="#222"/></svg>
<div class="t" style="left:17.5px;top:256.1px;font-size:15.5px;color:#555;transform:scaleX(0.9048);transform-origin:0 50%;">2</div>
<div class="abs" style="left:41px;top:260px;width:124px;height:70px;background:#b4c4e9;"></div>
<div class="t" style="left:41px;top:263.500px;width:124px;text-align:center;font-size:6.200px;color:#1f2d5c;font-family:'Liberation Serif',serif;font-weight:bold;">Проблемне поле лекції</div>
<div class="t" style="left:52px;top:279.3px;font-size:4.300px;color:#0d1030;font-family:'Liberation Serif',serif;font-weight:bold;">•Європейська культурна ідентичність і Вільям</div>
<div class="t" style="left:52px;top:283.6px;font-size:4.300px;color:#0d1030;font-family:'Liberation Serif',serif;font-weight:bold;">  Шекспір: характер кореляцій?</div>
<div class="t" style="left:52px;top:288.8px;font-size:4.300px;color:#0d1030;font-family:'Liberation Serif',serif;font-weight:bold;">•Чи потрібен нам «свій Шекспір»?: українська</div>
<div class="t" style="left:52px;top:293.1px;font-size:4.300px;color:#0d1030;font-family:'Liberation Serif',serif;font-weight:bold;">  модель переробокй Барда в контексті світових</div>
<div class="t" style="left:52px;top:298px;font-size:4.300px;color:#0d1030;font-family:'Liberation Serif',serif;font-weight:bold;">  традицій.</div>
<div class="t" style="left:52px;top:304.4px;font-size:4.300px;color:#0d1030;font-family:'Liberation Serif',serif;font-weight:bold;">•«Гамлетіанське» замовлення в Україні: причини і</div>
<div class="t" style="left:52px;top:308.4px;font-size:4.300px;color:#0d1030;font-family:'Liberation Serif',serif;font-weight:bold;">  наслідки.</div>
<div class="t" style="left:52px;top:313px;font-size:4.300px;color:#0d1030;font-family:'Liberation Serif',serif;font-weight:bold;">•Шекспір в Україні в час війни: Що? Де? Коли?</div>
<div class="t" style="left:17.5px;top:346.6px;font-size:15.5px;color:#555;transform:scaleX(0.9048);transform-origin:0 50%;">3</div>
<div class="abs" style="left:41px;top:350px;width:124px;height:70px;background:#b4c4e9;"></div>
<div class="t" style="left:41px;top:352.800px;width:124px;text-align:center;font-size:6.600px;color:#2f4170;font-family:'Liberation Serif',serif;font-weight:bold;">Європейська ідентичність</div>
<div class="abs" style="left:49px;top:364px;width:98px;height:1.3px;background:#8c98bd;opacity:.8"></div>
<div class="abs" style="left:49px;top:366.8px;width:104px;height:1.3px;background:#8c98bd;opacity:.8"></div>
<div class="abs" style="left:49px;top:369.5px;width:100px;height:1.3px;background:#8c98bd;opacity:.8"></div>
<div class="abs" style="left:49px;top:372.5px;width:104px;height:1.3px;background:#8c98bd;opacity:.8"></div>
<div class="abs" style="left:49px;top:375.5px;width:92px;height:1.3px;background:#8c98bd;opacity:.8"></div>
<div class="abs" style="left:49px;top:379.3px;width:84px;height:1.3px;background:#6f7aa5;opacity:.8"></div>
<div class="abs" style="left:49px;top:384.3px;width:72px;height:1.3px;background:#8c98bd;opacity:.8"></div>
<div class="abs" style="left:49px;top:390px;width:100px;height:1.3px;background:#8c98bd;opacity:.8"></div>
<div class="abs" style="left:49px;top:393px;width:108px;height:1.3px;background:#8c98bd;opacity:.8"></div>
<div class="abs" style="left:49px;top:396px;width:14px;height:1.3px;background:#8c98bd;opacity:.8"></div>
<div class="abs" style="left:49px;top:401.5px;width:96px;height:1.3px;background:#8c98bd;opacity:.8"></div>
<div class="abs" style="left:49px;top:404.5px;width:104px;height:1.3px;background:#8c98bd;opacity:.8"></div>
<div class="abs" style="left:49px;top:407.5px;width:108px;height:1.3px;background:#8c98bd;opacity:.8"></div>
<div class="abs" style="left:49px;top:410.5px;width:16px;height:1.3px;background:#8c98bd;opacity:.8"></div>
<div class="t" style="left:17.5px;top:437.1px;font-size:15.5px;color:#d04a2c;transform:scaleX(0.9048);transform-origin:0 50%;">4</div>
<div class="abs" style="left:38px;top:438px;width:130px;height:76px;background:#7b1113;"></div>
<div class="abs" style="left:41px;top:441px;width:124px;height:70px;background:#a3c2e8;"></div>
<div class="t" style="left:41px;top:442.600px;width:124px;text-align:center;font-size:4.800px;color:#111;font-family:'Liberation Serif',serif;font-weight:bold;">“To be or not to be” (16 березня 2022, Україна):</div>
<div class="t" style="left:41px;top:447.500px;width:124px;text-align:center;font-size:4.800px;color:#111;font-family:'Liberation Serif',serif;font-weight:bold;">спільність базових цінностей</div>
<svg class="abs" style="left:59px;top:454.5px;" width="88" height="49" viewBox="0 0 88 49"><rect width="88" height="49" fill="#09090b"/><path d="M36 0h23.500l-6.300 8-9.200 0.400-8-1.200z" fill="#676154"/><path d="M59.500 0h6.500l-1 10.500-9.300 3.300-2.500-5.800z" fill="#262521"/><path d="M66 0.300l14.700 0.800-0.500 6.700-2.300 9.400-3.500 9h-5.600l-1-4.200 1.100-6.300-2-3.100-1-3.100z" fill="#6d6b65"/><path d="M80.700 1.100l7.300-0.800v22l-9.700 0.300-3.900 3.600 3.500-9 2.300-9.400z" fill="#13120f"/><rect x="45.500" y="6.300" width="42.500" height="42.700" fill="#211f1b" opacity="0"/><path d="M45.700 6.300h20v30h-20z" fill="#1d1c19" opacity=".9"/><path d="M45.700 27h14v9h-14z" fill="#2e2d29"/><path d="M69.200 27.300h13.800v14l-7.800-1.100-4.700 0.300z" fill="#77756c"/><rect x="83" y="22" width="5" height="20" fill="#3b3a34"/><rect x="43.800" y="7.200" width="1.900" height="41.800" fill="#473f32"/><path d="M45.700 36.300h6.300l16.800 3.900 18.800 2.500v1.600l-27.200 0.300-14.700-6.900z" fill="#454133"/><path d="M45.700 37.800l10.200 6 2 4.700v0.500h-12.200z" fill="#514d3c"/><rect x="60" y="44.200" width="28" height="4.800" fill="#0e0d0a"/><rect x="60" y="44.200" width="27.600" height="1.200" fill="#6b654f"/><rect x="74.300" y="45" width="1.300" height="4" fill="#625d49"/><path d="M59.700 27.600h7.500l-0.300 6.600-1.900 0.300-1.100-4.100-1.700 4.100-2.300-0.500z" fill="#65645a"/><path d="M60 34l2.300 0.500-0.300 8h-2zM65 34.500l1.900-0.300 1.500 8.500h-3z" fill="#3a3a35"/><path d="M60 20.100h7.300l0.200 7.700h-7.700z" fill="#8d8d84"/><path d="M59.400 19.300l2.200-2.800h4.200l1.900 2.800-0.300 1.600-1.600-0.600-2 0.900-2.200-0.900-2.200 0.900z" fill="#2a4f9a"/><path d="M57.800 24.500l1.100-4.900 1.600 0.200 0.300 3.600z" fill="#c8a428"/><path d="M67.400 20.400l1.100 1.600 0.200 2.500-1 0z" fill="#c8a428"/><circle cx="63.800" cy="13.900" r="1.900" fill="#6a4a30"/><ellipse cx="63.700" cy="15.100" rx="1" ry="1.300" fill="#a98069"/><ellipse cx="83.300" cy="1.500" rx="0.900" ry="1.300" fill="#ebe4e2"/><g fill="#f2f2f2"><path d="M4.500 3.500h2.700v0.800h-2.700zM3.600 4.300h1.800v0.900h-1.800zM3.600 5.200h0.900v1.900h-0.900zM5.400 5.300h1.400v0.800h-1.400z"/><rect x="8.200" y="3.600" width="9.800" height="3.500"/><rect x="19.700" y="3.700" width="2.400" height="3.700" opacity=".9"/><rect x="23.900" y="3.800" width="2.200" height="3" opacity=".9"/><rect x="8.300" y="8.100" width="17.900" height="1.500" opacity=".7"/></g><rect y="48.700" width="88" height="0.300" fill="#1c6b2e"/></svg>
<div class="t" style="left:17.5px;top:527.6px;font-size:15.5px;color:#555;transform:scaleX(0.9048);transform-origin:0 50%;">5</div>
<svg class="abs" style="left:16px;top:545.5px;" width="10" height="9" viewBox="0 0 10 9"><path d="M0 2.500h2M0 4.500h2M0 6.500h1.500" stroke="#666" stroke-width="0.800"/><path d="M6 0l1.400 3h3l-2.400 2 1 3.200-3-1.900-3 1.900 1-3.200-2.400-2h3z" fill="#555" transform="translate(0.500,0.300) scale(0.900)"/></svg>
<div class="abs" style="left:41px;top:531.5px;width:124px;height:70px;background:#b4c4e9;"></div>
<div class="t" style="left:41px;top:535px;width:124px;text-align:center;font-size:4.600px;color:#111;font-family:'Liberation Serif',serif;font-weight:bold;">Засідання Британського Парламенту (24.04.2022):</div>
<div class="t" style="left:41px;top:540px;width:124px;text-align:center;font-size:4.600px;color:#1e2b66;font-family:'Liberation Serif',serif;font-weight:bold;">спільність простору культури</div>
<svg class="abs" style="left:57px;top:546px;" width="91.5" height="53" viewBox="0 0 91.5 53"><rect width="91.500" height="53" fill="#28303f"/><rect y="0" width="91.500" height="10" fill="#3b2f2a"/><rect y="30" width="91.500" height="23" fill="#20382f"/><rect x="0" y="16" width="12" height="30" fill="#232a3c"/><circle cx="5" cy="15" r="3.500" fill="#c9a184"/><rect x="16" y="12" width="17" height="34" fill="#1b2030"/><circle cx="29" cy="15.500" r="4" fill="#c9a184"/><path d="M25 12a4 4 0 0 1 8 0z" fill="#2a2020"/><rect x="27.500" y="20" width="3" height="12" fill="#e8e8ee"/><rect x="37" y="24" width="14" height="20" fill="#2a2a33"/><circle cx="44" cy="21" r="3.700" fill="#b98c70"/><path d="M39.500 21a4.500 5 0 0 1 9 0v4h-9z" fill="#1d1614" opacity=".8"/><rect x="56" y="25" width="17" height="21" fill="#e2407f"/><circle cx="64.500" cy="20.500" r="3.800" fill="#c08c6c"/><path d="M59.500 21a5 5.500 0 0 1 10 0v6h-2v-6h-6v6h-2z" fill="#191212"/><rect x="76" y="22" width="15.500" height="24" fill="#262c44"/><circle cx="82.500" cy="17.500" r="3.800" fill="#d0a98c"/><rect x="81.500" y="22" width="2" height="10" fill="#c33"/><circle cx="20" cy="5" r="3" fill="#b48a70"/><circle cx="43" cy="4" r="3" fill="#d6b0a0"/><rect x="38" y="6" width="11" height="9" fill="#7a2a33"/><circle cx="66" cy="4" r="3" fill="#c9a184"/><rect x="18" y="39" width="30" height="9" fill="#5a3a22"/><rect x="20" y="40" width="12" height="6" fill="#e8e2d0"/><rect x="20" y="41" width="3" height="4" fill="#d8b020"/><rect x="34" y="40" width="11" height="6" fill="#f2efe6"/><rect x="52" y="42" width="20" height="8" fill="#1a3a2a"/><rect x="70" y="47" width="21" height="6" fill="#ddd" opacity=".8"/><rect x="37.500" y="28" width="1.200" height="13" fill="#bbb"/></svg>
<div class="t" style="left:17.5px;top:618.6px;font-size:15.5px;color:#555;transform:scaleX(0.9048);transform-origin:0 50%;">6</div>
<svg class="abs" style="left:16px;top:636px;" width="10" height="9" viewBox="0 0 10 9"><path d="M0 2.500h2M0 4.500h2M0 6.500h1.500" stroke="#666" stroke-width="0.800"/><path d="M6 0l1.400 3h3l-2.400 2 1 3.200-3-1.900-3 1.900 1-3.200-2.400-2h3z" fill="#555" transform="translate(0.500,0.300) scale(0.900)"/></svg>
<div class="abs" style="left:41px;top:622px;width:124px;height:70px;background:#b4c4e9;"></div>
<div class="abs" style="left:41px;top:622px;width:124px;height:14px;background:#1a6fc4;"></div>
<div class="t" style="left:41px;top:624px;width:124px;text-align:center;font-size:4.900px;color:#fff;font-family:'Liberation Serif',serif;font-weight:bold;">Виступ Президента України у Британському</div>
<div class="t" style="left:41px;top:629.300px;width:124px;text-align:center;font-size:4.900px;color:#fff;font-family:'Liberation Serif',serif;font-weight:bold;">Парламенті:  спільність культурних кодів</div>
<svg class="abs" style="left:60px;top:636px;" width="86.5" height="49" viewBox="0 0 86.5 49"><rect width="86.500" height="49" fill="#eceae6"/><rect x="0" y="0" width="17" height="49" fill="#dcdad4"/><path d="M0 0h15c2 12 2 25 3 44l-8 3h-10z" fill="#2a49b0"/><path d="M0 22c6 3 11 8 17 21l-7 4h-10z" fill="#e9c820"/><path d="M30 33c0-4 8-6 19-6s19 2 19 6v16h-38z" fill="#6b4f44"/><path d="M28 49c1-9 6-12 21-12s20 3 21 12z" fill="#4c4b3c"/><ellipse cx="49" cy="22" rx="7" ry="8.500" fill="#c9a083"/><path d="M42 20c0-9 14-9 14 0c-2-3-12-3-14 0z" fill="#2b211b"/><path d="M43.500 26c2 6 9 6 11 0v4c-3 3-8 3-11 0z" fill="#6b5040" opacity=".7"/></svg>
<div class="t" style="left:17.5px;top:708.6px;font-size:15.5px;color:#555;transform:scaleX(0.9048);transform-origin:0 50%;">7</div>
<div class="abs" style="left:41px;top:712px;width:124px;height:59px;background:#bdd5ef;"></div>
<div class="t" style="left:41px;top:716.200px;width:124px;text-align:center;font-size:5.600px;color:#111;font-family:'Liberation Serif',serif;font-weight:bold;">Масштабність створеного Шекспіром</div>
<div class="abs" style="left:50px;top:727px;width:16px;height:1.3px;background:#222;opacity:.8"></div>
<div class="abs" style="left:68px;top:727px;width:82px;height:1.3px;background:#7f8aa5;opacity:.8"></div>
<div class="abs" style="left:50px;top:730.5px;width:66px;height:1.3px;background:#7f8aa5;opacity:.8"></div>
<div class="abs" style="left:50px;top:735.2px;width:13px;height:1.3px;background:#222;opacity:.8"></div>
<div class="abs" style="left:66px;top:735.2px;width:64px;height:1.3px;background:#7f8aa5;opacity:.8"></div>
<div class="abs" style="left:50px;top:740.3px;width:11px;height:1.3px;background:#222;opacity:.8"></div>
<div class="abs" style="left:64px;top:740.3px;width:35px;height:1.3px;background:#7f8aa5;opacity:.8"></div>
<div class="abs" style="left:50px;top:745px;width:11px;height:1.3px;background:#222;opacity:.8"></div>
<div class="abs" style="left:64px;top:745px;width:82px;height:1.3px;background:#7f8aa5;opacity:.8"></div>
<div class="abs" style="left:50px;top:748.3px;width:15px;height:1.3px;background:#7f8aa5;opacity:.8"></div>
<svg class="abs" style="left:48px;top:752.2px;" width="19" height="19" viewBox="0 0 19 19"><rect width="19" height="19" fill="#0e0c0c"/><ellipse cx="10.5" cy="8.500" rx="4" ry="4.800" fill="#d9cfc0"/><path d="M3 19c1-4 3.500-6 7.5-6s6 2 7 6z" fill="#d9cfc0" opacity=".65"/></svg>
<svg class="abs" style="left:78.2px;top:752.2px;" width="20.5" height="19" viewBox="0 0 20.5 19"><rect width="20.5" height="19" fill="#34312e"/><ellipse cx="11.25" cy="8.500" rx="4" ry="4.800" fill="#8c8478"/><path d="M3 19c1-4 3.500-6 8.25-6s6 2 7 6z" fill="#8c8478" opacity=".65"/></svg>
<svg class="abs" style="left:108px;top:752.2px;" width="20.8" height="19" viewBox="0 0 20.8 19"><rect width="20.8" height="19" fill="#141110"/><ellipse cx="11.4" cy="8.500" rx="4" ry="4.800" fill="#c8a890"/><path d="M3 19c1-4 3.500-6 8.4-6s6 2 7 6z" fill="#c8a890" opacity=".65"/></svg>
<svg class="abs" style="left:138px;top:752.2px;" width="19" height="19" viewBox="0 0 19 19"><rect width="19" height="19" fill="#27354f"/><ellipse cx="10.5" cy="8.500" rx="4" ry="4.800" fill="#7fa6d8"/><path d="M3 19c1-4 3.500-6 7.5-6s6 2 7 6z" fill="#7fa6d8" opacity=".65"/></svg>
<div class="abs" style="left:209.5px;top:288px;width:13.5px;height:440px;background:#fff;"></div>
<svg class="abs" style="left:209.5px;top:288px;overflow:hidden" width="13.5" height="440" viewBox="0 0 13.5 440"><text x="0" y="0" transform="translate(10.600,12.1) rotate(-90)" font-family="Liberation Sans" font-size="10.500" fill="#555" text-anchor="middle">9</text><path d="M4.500 23.8h4.500" stroke="#777" stroke-width="0.900"/><rect x="6.300" y="17.5" width="0.900" height="0.900" fill="#888"/><rect x="6.300" y="29.2" width="0.900" height="0.900" fill="#888"/><text x="0" y="0" transform="translate(10.600,35.4) rotate(-90)" font-family="Liberation Sans" font-size="10.500" fill="#555" text-anchor="middle">8</text><path d="M4.500 47.0h4.500" stroke="#777" stroke-width="0.900"/><rect x="6.300" y="40.8" width="0.900" height="0.900" fill="#888"/><rect x="6.300" y="52.4" width="0.900" height="0.900" fill="#888"/><text x="0" y="0" transform="translate(10.600,58.6) rotate(-90)" font-family="Liberation Sans" font-size="10.500" fill="#555" text-anchor="middle">7</text><path d="M4.500 70.2h4.500" stroke="#777" stroke-width="0.900"/><rect x="6.300" y="64.0" width="0.900" height="0.900" fill="#888"/><rect x="6.300" y="75.7" width="0.900" height="0.900" fill="#888"/><text x="0" y="0" transform="translate(10.600,81.9) rotate(-90)" font-family="Liberation Sans" font-size="10.500" fill="#555" text-anchor="middle">6</text><path d="M4.500 93.5h4.500" stroke="#777" stroke-width="0.900"/><rect x="6.300" y="87.3" width="0.900" height="0.900" fill="#888"/><rect x="6.300" y="98.9" width="0.900" height="0.900" fill="#888"/><text x="0" y="0" transform="translate(10.600,105.1) rotate(-90)" font-family="Liberation Sans" font-size="10.500" fill="#555" text-anchor="middle">5</text><path d="M4.500 116.7h4.500" stroke="#777" stroke-width="0.900"/><rect x="6.300" y="110.5" width="0.900" height="0.900" fill="#888"/><rect x="6.300" y="122.1" width="0.900" height="0.900" fill="#888"/><text x="0" y="0" transform="translate(10.600,128.3) rotate(-90)" font-family="Liberation Sans" font-size="10.500" fill="#555" text-anchor="middle">4</text><path d="M4.500 140.0h4.500" stroke="#777" stroke-width="0.900"/><rect x="6.300" y="133.8" width="0.900" height="0.900" fill="#888"/><rect x="6.300" y="145.4" width="0.900" height="0.900" fill="#888"/><text x="0" y="0" transform="translate(10.600,151.6) rotate(-90)" font-family="Liberation Sans" font-size="10.500" fill="#555" text-anchor="middle">3</text><path d="M4.500 163.2h4.500" stroke="#777" stroke-width="0.900"/><rect x="6.300" y="157.0" width="0.900" height="0.900" fill="#888"/><rect x="6.300" y="168.6" width="0.900" height="0.900" fill="#888"/><text x="0" y="0" transform="translate(10.600,174.8) rotate(-90)" font-family="Liberation Sans" font-size="10.500" fill="#555" text-anchor="middle">2</text><path d="M4.500 186.4h4.500" stroke="#777" stroke-width="0.900"/><rect x="6.300" y="180.2" width="0.900" height="0.900" fill="#888"/><rect x="6.300" y="191.8" width="0.900" height="0.900" fill="#888"/><text x="0" y="0" transform="translate(10.600,198.1) rotate(-90)" font-family="Liberation Sans" font-size="10.500" fill="#555" text-anchor="middle">1</text><path d="M4.500 209.7h4.500" stroke="#777" stroke-width="0.900"/><rect x="6.300" y="203.5" width="0.900" height="0.900" fill="#888"/><rect x="6.300" y="215.1" width="0.900" height="0.900" fill="#888"/><text x="0" y="0" transform="translate(10.600,221.3) rotate(-90)" font-family="Liberation Sans" font-size="10.500" fill="#555" text-anchor="middle">0</text><path d="M4.500 232.9h4.500" stroke="#777" stroke-width="0.900"/><rect x="6.300" y="226.7" width="0.900" height="0.900" fill="#888"/><rect x="6.300" y="238.3" width="0.900" height="0.900" fill="#888"/><text x="0" y="0" transform="translate(10.600,244.5) rotate(-90)" font-family="Liberation Sans" font-size="10.500" fill="#555" text-anchor="middle">1</text><path d="M4.500 256.2h4.500" stroke="#777" stroke-width="0.900"/><rect x="6.300" y="249.9" width="0.900" height="0.900" fill="#888"/><rect x="6.300" y="261.6" width="0.900" height="0.900" fill="#888"/><text x="0" y="0" transform="translate(10.600,267.8) rotate(-90)" font-family="Liberation Sans" font-size="10.500" fill="#555" text-anchor="middle">2</text><path d="M4.500 279.4h4.500" stroke="#777" stroke-width="0.900"/><rect x="6.300" y="273.2" width="0.900" height="0.900" fill="#888"/><rect x="6.300" y="284.8" width="0.900" height="0.900" fill="#888"/><text x="0" y="0" transform="translate(10.600,291.0) rotate(-90)" font-family="Liberation Sans" font-size="10.500" fill="#555" text-anchor="middle">3</text><path d="M4.500 302.6h4.500" stroke="#777" stroke-width="0.900"/><rect x="6.300" y="296.4" width="0.900" height="0.900" fill="#888"/><rect x="6.300" y="308.1" width="0.900" height="0.900" fill="#888"/><text x="0" y="0" transform="translate(10.600,314.3) rotate(-90)" font-family="Liberation Sans" font-size="10.500" fill="#555" text-anchor="middle">4</text><path d="M4.500 325.9h4.500" stroke="#777" stroke-width="0.900"/><rect x="6.300" y="319.7" width="0.900" height="0.900" fill="#888"/><rect x="6.300" y="331.3" width="0.900" height="0.900" fill="#888"/><text x="0" y="0" transform="translate(10.600,337.5) rotate(-90)" font-family="Liberation Sans" font-size="10.500" fill="#555" text-anchor="middle">5</text><path d="M4.500 349.1h4.500" stroke="#777" stroke-width="0.900"/><rect x="6.300" y="342.9" width="0.900" height="0.900" fill="#888"/><rect x="6.300" y="354.5" width="0.900" height="0.900" fill="#888"/><text x="0" y="0" transform="translate(10.600,360.7) rotate(-90)" font-family="Liberation Sans" font-size="10.500" fill="#555" text-anchor="middle">6</text><path d="M4.500 372.4h4.500" stroke="#777" stroke-width="0.900"/><rect x="6.300" y="366.2" width="0.900" height="0.900" fill="#888"/><rect x="6.300" y="377.8" width="0.900" height="0.900" fill="#888"/><text x="0" y="0" transform="translate(10.600,384.0) rotate(-90)" font-family="Liberation Sans" font-size="10.500" fill="#555" text-anchor="middle">7</text><path d="M4.500 395.6h4.500" stroke="#777" stroke-width="0.900"/><rect x="6.300" y="389.4" width="0.900" height="0.900" fill="#888"/><rect x="6.300" y="401.0" width="0.900" height="0.900" fill="#888"/><text x="0" y="0" transform="translate(10.600,407.2) rotate(-90)" font-family="Liberation Sans" font-size="10.500" fill="#555" text-anchor="middle">8</text><path d="M4.500 418.8h4.500" stroke="#777" stroke-width="0.900"/><rect x="6.300" y="412.6" width="0.900" height="0.900" fill="#888"/><rect x="6.300" y="424.3" width="0.900" height="0.900" fill="#888"/><text x="0" y="0" transform="translate(10.600,430.5) rotate(-90)" font-family="Liberation Sans" font-size="10.500" fill="#555" text-anchor="middle">9</text><rect x="6.300" y="5.9" width="0.900" height="0.900" fill="#888"/><path d="M4.500 0.5h4.500" stroke="#777" stroke-width="0.900"/></svg>
<div class="abs" style="left:209px;top:324px;width:15px;height:0;border-top:1px dotted #c0504d;opacity:.7"></div>
<div class="abs" style="left:347px;top:260px;width:786px;height:13.5px;background:#fff;"></div>
<svg class="abs" style="left:347px;top:260px;overflow:hidden" width="786" height="13.5" viewBox="0 0 786 13.5"><text x="21.0" y="10.800" font-family="Liberation Sans" font-size="10.500" fill="#555" text-anchor="middle">16</text><path d="M33.3 4.300v5" stroke="#777" stroke-width="0.900"/><rect x="38.0" y="6.300" width="0.900" height="0.900" fill="#888"/><text x="44.2" y="10.800" font-family="Liberation Sans" font-size="10.500" fill="#555" text-anchor="middle">15</text><path d="M56.5 4.300v5" stroke="#777" stroke-width="0.900"/><rect x="61.2" y="6.300" width="0.900" height="0.900" fill="#888"/><text x="67.4" y="10.800" font-family="Liberation Sans" font-size="10.500" fill="#555" text-anchor="middle">14</text><path d="M79.8 4.300v5" stroke="#777" stroke-width="0.900"/><rect x="84.5" y="6.300" width="0.900" height="0.900" fill="#888"/><text x="90.7" y="10.800" font-family="Liberation Sans" font-size="10.500" fill="#555" text-anchor="middle">13</text><path d="M103.0 4.300v5" stroke="#777" stroke-width="0.900"/><rect x="107.7" y="6.300" width="0.900" height="0.900" fill="#888"/><text x="113.9" y="10.800" font-family="Liberation Sans" font-size="10.500" fill="#555" text-anchor="middle">12</text><path d="M126.2 4.300v5" stroke="#777" stroke-width="0.900"/><rect x="130.9" y="6.300" width="0.900" height="0.900" fill="#888"/><text x="137.2" y="10.800" font-family="Liberation Sans" font-size="10.500" fill="#555" text-anchor="middle">11</text><path d="M149.5 4.300v5" stroke="#777" stroke-width="0.900"/><rect x="154.2" y="6.300" width="0.900" height="0.900" fill="#888"/><text x="160.4" y="10.800" font-family="Liberation Sans" font-size="10.500" fill="#555" text-anchor="middle">10</text><path d="M172.7 4.300v5" stroke="#777" stroke-width="0.900"/><rect x="177.4" y="6.300" width="0.900" height="0.900" fill="#888"/><text x="183.6" y="10.800" font-family="Liberation Sans" font-size="10.500" fill="#555" text-anchor="middle">9</text><path d="M196.0 4.300v5" stroke="#777" stroke-width="0.900"/><rect x="189.0" y="6.300" width="0.900" height="0.900" fill="#888"/><rect x="200.7" y="6.300" width="0.900" height="0.900" fill="#888"/><text x="206.9" y="10.800" font-family="Liberation Sans" font-size="10.500" fill="#555" text-anchor="middle">8</text><path d="M219.2 4.300v5" stroke="#777" stroke-width="0.900"/><rect x="212.3" y="6.300" width="0.900" height="0.900" fill="#888"/><rect x="223.9" y="6.300" width="0.900" height="0.900" fill="#888"/><text x="230.1" y="10.800" font-family="Liberation Sans" font-size="10.500" fill="#555" text-anchor="middle">7</text><path d="M242.4 4.300v5" stroke="#777" stroke-width="0.900"/><rect x="235.5" y="6.300" width="0.900" height="0.900" fill="#888"/><rect x="247.2" y="6.300" width="0.900" height="0.900" fill="#888"/><text x="253.4" y="10.800" font-family="Liberation Sans" font-size="10.500" fill="#555" text-anchor="middle">6</text><path d="M265.7 4.300v5" stroke="#777" stroke-width="0.900"/><rect x="258.8" y="6.300" width="0.900" height="0.900" fill="#888"/><rect x="270.4" y="6.300" width="0.900" height="0.900" fill="#888"/><text x="276.6" y="10.800" font-family="Liberation Sans" font-size="10.500" fill="#555" text-anchor="middle">5</text><path d="M288.9 4.300v5" stroke="#777" stroke-width="0.900"/><rect x="282.0" y="6.300" width="0.900" height="0.900" fill="#888"/><rect x="293.6" y="6.300" width="0.900" height="0.900" fill="#888"/><text x="299.8" y="10.800" font-family="Liberation Sans" font-size="10.500" fill="#555" text-anchor="middle">4</text><path d="M312.2 4.300v5" stroke="#777" stroke-width="0.900"/><rect x="305.2" y="6.300" width="0.900" height="0.900" fill="#888"/><rect x="316.9" y="6.300" width="0.900" height="0.900" fill="#888"/><text x="323.1" y="10.800" font-family="Liberation Sans" font-size="10.500" fill="#555" text-anchor="middle">3</text><path d="M335.4 4.300v5" stroke="#777" stroke-width="0.900"/><rect x="328.5" y="6.300" width="0.900" height="0.900" fill="#888"/><rect x="340.1" y="6.300" width="0.900" height="0.900" fill="#888"/><text x="346.3" y="10.800" font-family="Liberation Sans" font-size="10.500" fill="#555" text-anchor="middle">2</text><path d="M358.6 4.300v5" stroke="#777" stroke-width="0.900"/><rect x="351.7" y="6.300" width="0.900" height="0.900" fill="#888"/><rect x="363.3" y="6.300" width="0.900" height="0.900" fill="#888"/><text x="369.6" y="10.800" font-family="Liberation Sans" font-size="10.500" fill="#555" text-anchor="middle">1</text><path d="M381.9 4.300v5" stroke="#777" stroke-width="0.900"/><rect x="375.0" y="6.300" width="0.900" height="0.900" fill="#888"/><rect x="386.6" y="6.300" width="0.900" height="0.900" fill="#888"/><text x="392.8" y="10.800" font-family="Liberation Sans" font-size="10.500" fill="#555" text-anchor="middle">0</text><path d="M405.1 4.300v5" stroke="#777" stroke-width="0.900"/><rect x="398.2" y="6.300" width="0.900" height="0.900" fill="#888"/><rect x="409.8" y="6.300" width="0.900" height="0.900" fill="#888"/><text x="416.0" y="10.800" font-family="Liberation Sans" font-size="10.500" fill="#555" text-anchor="middle">1</text><path d="M428.4 4.300v5" stroke="#777" stroke-width="0.900"/><rect x="421.4" y="6.300" width="0.900" height="0.900" fill="#888"/><rect x="433.1" y="6.300" width="0.900" height="0.900" fill="#888"/><text x="439.3" y="10.800" font-family="Liberation Sans" font-size="10.500" fill="#555" text-anchor="middle">2</text><path d="M451.6 4.300v5" stroke="#777" stroke-width="0.900"/><rect x="444.7" y="6.300" width="0.900" height="0.900" fill="#888"/><rect x="456.3" y="6.300" width="0.900" height="0.900" fill="#888"/><text x="462.5" y="10.800" font-family="Liberation Sans" font-size="10.500" fill="#555" text-anchor="middle">3</text><path d="M474.8 4.300v5" stroke="#777" stroke-width="0.900"/><rect x="467.9" y="6.300" width="0.900" height="0.900" fill="#888"/><rect x="479.6" y="6.300" width="0.900" height="0.900" fill="#888"/><text x="485.8" y="10.800" font-family="Liberation Sans" font-size="10.500" fill="#555" text-anchor="middle">4</text><path d="M498.1 4.300v5" stroke="#777" stroke-width="0.900"/><rect x="491.2" y="6.300" width="0.900" height="0.900" fill="#888"/><rect x="502.8" y="6.300" width="0.900" height="0.900" fill="#888"/><text x="509.0" y="10.800" font-family="Liberation Sans" font-size="10.500" fill="#555" text-anchor="middle">5</text><path d="M521.3 4.300v5" stroke="#777" stroke-width="0.900"/><rect x="514.4" y="6.300" width="0.900" height="0.900" fill="#888"/><rect x="526.0" y="6.300" width="0.900" height="0.900" fill="#888"/><text x="532.2" y="10.800" font-family="Liberation Sans" font-size="10.500" fill="#555" text-anchor="middle">6</text><path d="M544.6 4.300v5" stroke="#777" stroke-width="0.900"/><rect x="537.6" y="6.300" width="0.900" height="0.900" fill="#888"/><rect x="549.3" y="6.300" width="0.900" height="0.900" fill="#888"/><text x="555.5" y="10.800" font-family="Liberation Sans" font-size="10.500" fill="#555" text-anchor="middle">7</text><path d="M567.8 4.300v5" stroke="#777" stroke-width="0.900"/><rect x="560.9" y="6.300" width="0.900" height="0.900" fill="#888"/><rect x="572.5" y="6.300" width="0.900" height="0.900" fill="#888"/><text x="578.7" y="10.800" font-family="Liberation Sans" font-size="10.500" fill="#555" text-anchor="middle">8</text><path d="M591.0 4.300v5" stroke="#777" stroke-width="0.900"/><rect x="584.1" y="6.300" width="0.900" height="0.900" fill="#888"/><rect x="595.7" y="6.300" width="0.900" height="0.900" fill="#888"/><text x="602.0" y="10.800" font-family="Liberation Sans" font-size="10.500" fill="#555" text-anchor="middle">9</text><path d="M614.3 4.300v5" stroke="#777" stroke-width="0.900"/><rect x="607.4" y="6.300" width="0.900" height="0.900" fill="#888"/><text x="625.2" y="10.800" font-family="Liberation Sans" font-size="10.500" fill="#555" text-anchor="middle">10</text><path d="M637.5 4.300v5" stroke="#777" stroke-width="0.900"/><rect x="630.6" y="6.300" width="0.900" height="0.900" fill="#888"/><text x="648.4" y="10.800" font-family="Liberation Sans" font-size="10.500" fill="#555" text-anchor="middle">11</text><path d="M660.8 4.300v5" stroke="#777" stroke-width="0.900"/><rect x="653.8" y="6.300" width="0.900" height="0.900" fill="#888"/><text x="671.7" y="10.800" font-family="Liberation Sans" font-size="10.500" fill="#555" text-anchor="middle">12</text><path d="M684.0 4.300v5" stroke="#777" stroke-width="0.900"/><rect x="677.1" y="6.300" width="0.900" height="0.900" fill="#888"/><text x="694.9" y="10.800" font-family="Liberation Sans" font-size="10.500" fill="#555" text-anchor="middle">13</text><path d="M707.2 4.300v5" stroke="#777" stroke-width="0.900"/><rect x="700.3" y="6.300" width="0.900" height="0.900" fill="#888"/><text x="718.2" y="10.800" font-family="Liberation Sans" font-size="10.500" fill="#555" text-anchor="middle">14</text><path d="M730.5 4.300v5" stroke="#777" stroke-width="0.900"/><rect x="723.6" y="6.300" width="0.900" height="0.900" fill="#888"/><text x="741.4" y="10.800" font-family="Liberation Sans" font-size="10.500" fill="#555" text-anchor="middle">15</text><path d="M753.7 4.300v5" stroke="#777" stroke-width="0.900"/><rect x="746.8" y="6.300" width="0.900" height="0.900" fill="#888"/><text x="764.6" y="10.800" font-family="Liberation Sans" font-size="10.500" fill="#555" text-anchor="middle">16</text><path d="M9.3 4.300v5M776.3 4.300v5" stroke="#777" stroke-width="0.900"/></svg>
<div class="abs" style="left:799px;top:260px;width:0;height:14px;border-left:1px dashed #c0504d"></div>
<div class="abs" style="left:1249px;top:257px;width:17px;height:429px;background:#f1f1f1;"></div>
<div class="abs" style="left:1249px;top:257px;width:16.5px;height:16.5px;background:#fff;border:1px solid #a9a9a9"></div>
<svg class="abs" style="left:1253.25px;top:262.75px;" width="8" height="5" viewBox="0 0 8 5"><path d="M0 4.500l4-4.500 4 4.500z" fill="#222"/></svg>
<div class="abs" style="left:1249px;top:294px;width:16.5px;height:17px;background:#fff;border:1px solid #a9a9a9"></div>
<div class="abs" style="left:1249px;top:669px;width:16.5px;height:16.5px;background:#fff;border:1px solid #a9a9a9"></div>
<svg class="abs" style="left:1253.25px;top:675.25px;" width="8" height="5" viewBox="0 0 8 5"><path d="M0 0h8l-4 4.500z" fill="#222"/></svg>
<svg class="abs" style="left:1252px;top:688px;" width="11" height="12.5" viewBox="0 0 11 12.5"><path d="M5.500 0l5 6h-3l3.500 6.300h-11l3.500-6.300h-3z" fill="#6e6e6e"/></svg>
<svg class="abs" style="left:1252px;top:705px;" width="11" height="12.5" viewBox="0 0 11 12.5"><path d="M5.500 12.500l5-6h-3l3.500-6.300h-11l3.500 6.300h-3z" fill="#6e6e6e"/></svg>
<div class="abs" style="left:205px;top:739px;width:1061px;height:1px;background:#c2c2c2;"></div>
<div class="t" style="left:216.0px;top:748.2px;font-size:14px;color:#555;">Нотатки до слайда</div>
<div class="abs" style="left:1249px;top:742.5px;width:16.5px;height:13.5px;background:#fff;border:1px solid #a9a9a9"></div>
<svg class="abs" style="left:1253.25px;top:746.75px;" width="8" height="5" viewBox="0 0 8 5"><path d="M0 4.500l4-4.500 4 4.500z" fill="#222"/></svg>
<div class="abs" style="left:1249px;top:756px;width:16.5px;height:14.5px;background:#fff;border:1px solid #a9a9a9"></div>
<svg class="abs" style="left:1253.25px;top:761.25px;" width="8" height="5" viewBox="0 0 8 5"><path d="M0 0h8l-4 4.500z" fill="#222"/></svg>

<!-- SLIDE -->

<div class="abs" style="left:345px;top:287px;width:788px;height:443px;background:#a0c1e8;"></div>
<div class="t" style="left:432.3px;top:297.7px;font-size:29px;color:#0a0a0a;letter-spacing:0.20px;font-family:'Liberation Serif',serif;font-weight:bold;">“To be or not to be” (16 березня 2022, Україна):</div>
<div class="t" style="left:545.2px;top:330.5px;font-size:29px;color:#0a0a0a;letter-spacing:0.23px;font-family:'Liberation Serif',serif;font-weight:bold;">спільність базових цінностей</div>
<svg class="abs" style="left:459px;top:371px;overflow:hidden" width="559.5" height="315" viewBox="0 0 560 315"><defs>
<filter id="pb" x="-2%" y="-2%" width="104%" height="104%" color-interpolation-filters="sRGB"><feGaussianBlur stdDeviation="1.200"/></filter>
<filter id="pb2" x="-10%" y="-10%" width="120%" height="120%" color-interpolation-filters="sRGB"><feGaussianBlur stdDeviation="3.500"/></filter>
<filter id="crk" x="0" y="0" width="100%" height="100%" color-interpolation-filters="sRGB"><feTurbulence type="turbulence" baseFrequency="0.160 0.070" numOctaves="3" seed="11"/><feColorMatrix type="matrix" values="0 0 0 0 0.850  0 0 0 0 0.840  0 0 0 0 0.800  2.600 2.200 0 0 -1.450"/><feGaussianBlur stdDeviation="0.600"/></filter>
<filter id="crk2" x="0" y="0" width="100%" height="100%" color-interpolation-filters="sRGB"><feTurbulence type="turbulence" baseFrequency="0.100 0.180" numOctaves="3" seed="5"/><feColorMatrix type="matrix" values="0 0 0 0 0.080  0 0 0 0 0.080  0 0 0 0 0.070  -2.400 -2 0 0 1.050"/><feGaussianBlur stdDeviation="0.700"/></filter>
<filter id="grain" x="0" y="0" width="100%" height="100%" color-interpolation-filters="sRGB"><feTurbulence type="fractalNoise" baseFrequency="0.180" numOctaves="2" seed="3"/><feColorMatrix type="matrix" values="0 0 0 0 0.700  0 0 0 0 0.680  0 0 0 0 0.600  1.500 1.200 0 0 -1"/></filter>
<clipPath id="pc"><rect width="560" height="315"/></clipPath>
<clipPath id="foil1"><path d="M419 2l94 5-3 43-15 60-22 57h-36l-6-27 7-40-13-20-6-20z"/></clipPath>
<clipPath id="foil2"><path d="M440 174h88v89l-50-7-29.500 2z"/></clipPath>
<clipPath id="foil3"><path d="M292 168h88v68h-88z"/></clipPath>
<clipPath id="foil4"><path d="M338 51l40-49h41l-6 65-59 21z"/></clipPath>
<linearGradient id="tarp" x1="0" y1="0" x2="1" y2="1"><stop offset="0" stop-color="#5e584a"/><stop offset="0.500" stop-color="#777160"/><stop offset="1" stop-color="#4c473b"/></linearGradient>
<linearGradient id="plat" x1="0" y1="0" x2="0" y2="1"><stop offset="0" stop-color="#3b382c"/><stop offset="1" stop-color="#514d3c"/></linearGradient>
</defs>
<g clip-path="url(#pc)">
<rect width="560" height="315" fill="#08080a"/>
<g filter="url(#pb2)">
<rect x="60" y="20" width="80" height="50" fill="#0d0d10"/>
<rect x="120" y="110" width="50" height="70" fill="#0e0e10"/>
<rect x="0" y="250" width="280" height="65" fill="#0c0c0b"/>
<rect x="200" y="215" width="80" height="100" fill="#11110e"/>
<ellipse cx="96" cy="82" rx="20" ry="7" fill="#232325" transform="rotate(14 96 82)"/>
<rect x="185" y="0" width="45" height="55" fill="#0f0f11"/>
</g>
<g filter="url(#pb)">
<!-- back wall right part -->
<rect x="289" y="40" width="271" height="275" fill="#211f1b"/>
<path d="M289 60h60l30 30v80h-90z" fill="#191815"/>
<!-- tarp ceiling -->
<path d="M228 0h150l-40 51-58 2-24-6-28-2z" fill="url(#tarp)"/>
<path d="M228 0h40l-6 44-34 1z" fill="#4a4538"/>
<path d="M256 40h24v13l-24-6z" fill="#3c382d"/>
<!-- dark diagonal band -->
<path d="M378 2h41l-6 65-59 21-16-37z" fill="#262521"/>
<!-- right dark -->
<path d="M513 7l47-5v140l-62 2-25 23 22-57 15-60z" fill="#13120f"/>
<path d="M528 60l32-20v100l-42 3z" fill="#1d1c19"/>
<!-- foil main -->
<path d="M419 2l94 5-3 43-15 60-22 57h-36l-6-27 7-40-13-20-6-20z" fill="#56544f"/>
<path d="M421 4l22 0-4 60-10 6-16-3z" fill="#8d8b85"/>
<path d="M472 10l36 0-6 46-14 54-20 56-12 0z" fill="#4a4844"/>
<!-- lower-mid foil patches -->
<path d="M290.500 172h36v50h-36z" fill="#33322e"/>
<path d="M336 172h40v52h-40z" fill="#2b2a27"/>
<path d="M292 160h90v14h-90z" fill="#1c1b18"/>
<!-- lower right foil -->
<path d="M440 174h88v89l-50-7-29.500 2z" fill="#65635a"/>
<path d="M452 176h30l-4 78-24 2z" fill="#7b7970"/>
<path d="M426 190h22v66l-22-4z" fill="#1c1b18"/>
<!-- fence -->
<rect x="528" y="140" width="32" height="130" fill="#34332e"/>
<rect x="522" y="146" width="6.500" height="120" fill="#6b6653"/><rect x="538" y="140" width="7" height="132" fill="#6b6653"/>
<rect x="497" y="143" width="63" height="4" fill="#6b6653"/>
<path d="M486 164h22l3 10h-27z" fill="#9a8568"/>
<path d="M440 160h50v14h-50z" fill="#14130f"/>
<!-- post -->
<rect x="279" y="46" width="11.500" height="269" fill="#473f32"/>
<rect x="279" y="46" width="3.500" height="269" fill="#2f2a21"/>
<rect x="282" y="50" width="24" height="15" fill="#3a3832"/><rect x="284" y="53" width="10" height="7" fill="#6a6a66"/>
<!-- hanging lamps etc -->
<path d="M314 88l24 10-5 10-24-10z" fill="#8f8d85"/><path d="M318 92l12 5-2 4-12-5z" fill="#5a5852"/>
<path d="M297 120l12-9 3 5-12 9z" fill="#c4c2ba"/>
<ellipse cx="262" cy="124" rx="6" ry="6" fill="#5a574e"/><ellipse cx="211" cy="128" rx="3" ry="4" fill="#3a3934"/>
<!-- platform -->
<path d="M290.500 231h40l107 25 120 16v10l-173 2-94-44z" fill="url(#plat)"/>
<path d="M290.500 240.500l65 38.500 12.500 30v6h-77.500z" fill="#514d3c"/>
<path d="M355.500 279l29.500 5v31h-17z" fill="#2b281f"/>
<path d="M291 222h32v10h-32z" fill="#5f5c52"/><path d="M296 214h20v8h-20z" fill="#3a3934"/>
<rect x="382" y="281" width="178" height="34" fill="#0e0d0a"/>
<path d="M382 281h175.500v8h-175.500z" fill="#6b654f"/>
<rect x="382" y="285" width="7" height="30" fill="#5a5543"/>
<rect x="473" y="287" width="8.500" height="28" fill="#625d49"/>
<path d="M473 289l-36 26h8l33-24zM481.500 289l24 26h-8l-22-24z" fill="#5a5543"/>
<path d="M540 284h20v31h-30z" fill="#0b0808"/>
<!-- man shadow on foil -->
<path d="M426 188h20l4 68-22-2z" fill="#191815"/>
<!-- man -->
<path d="M380 175.500h47.500l-1.800 42-12.300 1.900-7-26.400-10.500 26.400-14.900-3.400z" fill="#65645a"/>
<path d="M381 216l15 3.400-1 15-13-1zM413.400 219.400l12.300-1.700 0.800 15-12 2z" fill="#2a2a27"/>
<path d="M382 233l13 1-1 21-11 0zM414.500 234.500l12-1.500 1 20-11 1.500z" fill="#68675d"/>
<path d="M381 254h14l2 22-4 10h-13zM415 254h13l10 18v8l-20 2z" fill="#12120f"/>
<path d="M382 128h46.500l1 49h-49z" fill="#8d8d84"/>
<path d="M392 146h27v20h-27z" fill="#3b3b39"/><path d="M395 150h6v3h-3v3h3v6h-6v-3h3v-3h-3zM404 150h9v3h-3v9h-3v-9h-3z" fill="#c9c9c2"/>
<path d="M378 123l14-18h27l12 18-2 10-10-4-13 6-14-6-14 6z" fill="#2a4f9a"/>
<path d="M368 156l7-31 10 1 2 23z" fill="#c8a428"/><path d="M429 130l7 10 1 16-6 0z" fill="#c8a428"/>
<path d="M384 146l20-7 12 1v8l-30 9z" fill="#a19588"/><path d="M404 139l10-4 5 4-3 6z" fill="#b39a86"/>
<circle cx="406" cy="88.500" r="12" fill="#5d4029"/>
<path d="M394.500 86c2-11 21-11 23 0c-5-4-18-4-23 0z" fill="#85633f"/>
<ellipse cx="405.500" cy="96" rx="6.500" ry="8.500" fill="#a98069"/>
<path d="M399.500 99c2 6 10 6 12 0v5c-3 3-9 3-12 0z" fill="#6a4c38"/>
<rect x="404.700" y="101" width="1.700" height="186" fill="#0d0d0c"/><ellipse cx="405.300" cy="101" rx="2.600" ry="3.300" fill="#26221f"/>
<path d="M405.500 284l-10 5M405.500 284l10 5" stroke="#0d0d0c" stroke-width="1.500"/>
</g>
<!-- textures -->
<g clip-path="url(#foil1)"><rect x="405" y="0" width="115" height="172" filter="url(#crk)" opacity=".62"/><rect x="405" y="0" width="115" height="172" filter="url(#crk2)" opacity=".40"/></g>
<g clip-path="url(#foil2)"><rect x="438" y="170" width="92" height="96" filter="url(#crk)" opacity=".50"/><rect x="438" y="170" width="92" height="96" filter="url(#crk2)" opacity=".35"/></g>
<g clip-path="url(#foil3)"><rect x="290" y="166" width="92" height="72" filter="url(#crk)" opacity=".16"/></g>
<g clip-path="url(#foil4)"><rect x="336" y="0" width="86" height="90" filter="url(#crk)" opacity=".10"/></g>
<rect x="528" y="146" width="32" height="124" filter="url(#grain)" opacity=".25"/>
<!-- cables -->
<g fill="none" filter="url(#pb)">
<path d="M462.600 2c-12 30-40 60-77.600 79c-25 8-50 6-70 3" stroke="#d3cfc3" stroke-width="1.100" opacity=".8"/>
<path d="M415 30c-20 18-40 24-96 28" stroke="#8c897e" stroke-width="0.900" opacity=".7"/>
<path d="M560 8c-20 34-40 70-56 98" stroke="#a09c90" stroke-width="0.900" opacity=".7"/>
<path d="M492 20c2 40-8 90-32 124" stroke="#c9c5b8" stroke-width="1" opacity=".55"/>
<path d="M282 68c12 4 20 10 32 22M300 100l-8 18" stroke="#b5b1a6" stroke-width="1" opacity=".7"/>
</g>
<!-- bulb -->
<ellipse cx="530" cy="9.500" rx="5.500" ry="8.500" fill="#ebe4e2" filter="url(#pb)"/>
<!-- logo -->
<g fill="#fff">
<path d="M28.800 22.200h17.200v5.300h-17.200zM23 27.500h11.500v5.500h-11.500zM23 33h6v12h-6zM34.500 33.500h9v5.500h-9z"/>
<g opacity=".85"><rect x="23" y="48" width="22.500" height="1.600"/><rect x="23.500" y="53.500" width="2" height="1.800"/><rect x="38.500" y="53.500" width="6.500" height="1.800"/><rect x="23.800" y="58" width="1.700" height="2.600"/><rect x="27" y="58.800" width="3" height="1.800"/><rect x="38.500" y="58.500" width="7" height="2"/></g>
<text transform="translate(52.300,45.500) scale(0.628,1)" font-family="Liberation Sans" font-weight="bold" font-size="31.500">ТЕАТР</text>
<text transform="translate(152.300,43.500) scale(0.800,1)" font-family="Liberation Sans" font-size="26.500" opacity=".95">У</text>
<text x="52.800" y="62" font-family="Liberation Sans" font-size="14.600" opacity=".80" textLength="114.200" lengthAdjust="spacingAndGlyphs">БОМБОСХОВИЩІ</text>
</g>
<path d="M133.300 23.500v22.500M125.800 38.500l7.500 8 7.500-8" fill="none" stroke="#fff" stroke-width="2.300"/>
<rect x="0" y="313.300" width="560" height="1.700" fill="#1c6b2e"/>
</g></svg>
<svg class="abs" style="left:795.5px;top:314.5px;" width="7" height="17" viewBox="0 0 7 17"><path d="M0.500 0.800c1.500 0 2.500 0.300 3 1.200c0.500-0.900 1.500-1.200 3-1.200M0.500 16.200c1.500 0 2.500-0.300 3-1.200c0.500 0.900 1.500 1.200 3 1.200M3.500 2v13M2 8.500h3" fill="none" stroke="#0a0a0a" stroke-width="1.500"/></svg>

<!-- VIDEO -->

<svg class="abs" style="left:1278px;top:348px;overflow:hidden" width="316" height="178" viewBox="0 0 316 178"><defs>
<filter id="vb" x="-5%" y="-5%" width="110%" height="110%"><feGaussianBlur stdDeviation="1.100"/></filter>
<filter id="vb3" x="-20%" y="-20%" width="140%" height="140%"><feGaussianBlur stdDeviation="4"/></filter>
<filter id="hairf" x="-10%" y="-10%" width="120%" height="120%" color-interpolation-filters="sRGB"><feTurbulence type="fractalNoise" baseFrequency="0.090" numOctaves="2" seed="2" result="t"/><feDisplacementMap in="SourceGraphic" in2="t" scale="9" xChannelSelector="R" yChannelSelector="G"/><feGaussianBlur stdDeviation="0.700"/></filter>
<filter id="vb2" x="-10%" y="-10%" width="120%" height="120%"><feGaussianBlur stdDeviation="2"/></filter>
<linearGradient id="wall" x1="0" x2="1"><stop offset="0" stop-color="#fbfbfa"/><stop offset="0.730" stop-color="#f4f3f0"/><stop offset="0.800" stop-color="#dcd9d2"/><stop offset="1" stop-color="#cfccc4"/></linearGradient>
<radialGradient id="face" cx="0.450" cy="0.450" r="0.600"><stop offset="0" stop-color="#e4c3d2"/><stop offset="0.600" stop-color="#d2a9bd"/><stop offset="1" stop-color="#b98aa2"/></radialGradient>
<linearGradient id="top" x1="0" x2="1"><stop offset="0" stop-color="#16207a"/><stop offset="0.500" stop-color="#2335b3"/><stop offset="1" stop-color="#1a2793"/></linearGradient>
<clipPath id="vc"><rect width="316" height="178"/></clipPath>
</defs>
<g clip-path="url(#vc)">
<rect width="316" height="178" fill="url(#wall)"/>
<g stroke="#8a8a8a" stroke-width="0.350" stroke-dasharray="0.600 1.200" fill="none" opacity=".75"><path d="M11.1 44.7L8.3 56.1"/><path d="M11.1 44.7L34.7 55.5"/><path d="M11.1 44.7L36.9 76.5"/><path d="M11.1 44.7L45.5 76.5"/><path d="M11.1 44.7L13.2 80.8"/><path d="M63.5 46.2L34.7 55.5"/><path d="M63.5 46.2L60.7 57.7"/><path d="M63.5 46.2L86.7 57.0"/><path d="M63.5 46.2L36.9 76.5"/><path d="M63.5 46.2L45.5 76.5"/><path d="M63.5 46.2L65.0 82.6"/><path d="M63.5 46.2L88.9 78.2"/><path d="M63.5 46.2L97.5 78.7"/><path d="M117.0 44.7L86.7 57.0"/><path d="M117.0 44.7L114.4 56.1"/><path d="M117.0 44.7L141.1 55.5"/><path d="M117.0 44.7L88.9 78.2"/><path d="M117.0 44.7L119.2 80.8"/><path d="M8.3 56.1L34.7 55.5"/><path d="M8.3 56.1L45.5 76.5"/><path d="M8.3 56.1L22.3 92.8"/><path d="M8.3 56.1L36.4 89.9"/><path d="M34.7 55.5L60.7 57.7"/><path d="M34.7 55.5L36.9 76.5"/><path d="M34.7 55.5L45.5 76.5"/><path d="M34.7 55.5L13.2 80.8"/><path d="M34.7 55.5L65.0 82.6"/><path d="M34.7 55.5L22.3 92.8"/><path d="M34.7 55.5L36.4 89.9"/><path d="M60.7 57.7L86.7 57.0"/><path d="M60.7 57.7L36.9 76.5"/><path d="M60.7 57.7L45.5 76.5"/><path d="M60.7 57.7L65.0 82.6"/><path d="M60.7 57.7L88.9 78.2"/><path d="M60.7 57.7L97.5 78.7"/><path d="M60.7 57.7L36.4 89.9"/><path d="M60.7 57.7L74.3 94.5"/><path d="M60.7 57.7L88.9 91.7"/><path d="M86.7 57.0L114.4 56.1"/><path d="M86.7 57.0L45.5 76.5"/><path d="M86.7 57.0L65.0 82.6"/><path d="M86.7 57.0L88.9 78.2"/><path d="M86.7 57.0L97.5 78.7"/><path d="M86.7 57.0L119.2 80.8"/><path d="M86.7 57.0L88.9 91.7"/><path d="M114.4 56.1L141.1 55.5"/><path d="M114.4 56.1L97.5 78.7"/><path d="M114.4 56.1L119.2 80.8"/><path d="M114.4 56.1L88.9 91.7"/><path d="M114.4 56.1L128.1 92.8"/><path d="M141.1 55.5L119.2 80.8"/><path d="M141.1 55.5L128.1 92.8"/><path d="M36.9 76.5L45.5 76.5"/><path d="M36.9 76.5L13.2 80.8"/><path d="M36.9 76.5L65.0 82.6"/><path d="M36.9 76.5L36.4 89.9"/><path d="M36.9 76.5L74.3 94.5"/><path d="M36.9 76.5L45.5 109.0"/><path d="M36.9 76.5L13.7 114.0"/><path d="M45.5 76.5L13.2 80.8"/><path d="M45.5 76.5L65.0 82.6"/><path d="M45.5 76.5L22.3 92.8"/><path d="M45.5 76.5L36.4 89.9"/><path d="M45.5 76.5L74.3 94.5"/><path d="M45.5 76.5L88.9 91.7"/><path d="M45.5 76.5L45.5 109.0"/><path d="M13.2 80.8L22.3 92.8"/><path d="M13.2 80.8L36.4 89.9"/><path d="M13.2 80.8L45.5 109.0"/><path d="M13.2 80.8L13.7 114.0"/><path d="M65.0 82.6L88.9 78.2"/><path d="M65.0 82.6L97.5 78.7"/><path d="M65.0 82.6L22.3 92.8"/><path d="M65.0 82.6L36.4 89.9"/><path d="M65.0 82.6L74.3 94.5"/><path d="M65.0 82.6L88.9 91.7"/><path d="M65.0 82.6L45.5 109.0"/><path d="M65.0 82.6L65.7 115.9"/><path d="M65.0 82.6L97.5 110.7"/><path d="M88.9 78.2L119.2 80.8"/><path d="M88.9 78.2L74.3 94.5"/><path d="M88.9 78.2L88.9 91.7"/><path d="M88.9 78.2L65.7 115.9"/><path d="M88.9 78.2L119.8 114.0"/><path d="M97.5 78.7L119.2 80.8"/><path d="M97.5 78.7L74.3 94.5"/><path d="M97.5 78.7L97.5 110.7"/><path d="M97.5 78.7L119.8 114.0"/><path d="M119.2 80.8L74.3 94.5"/><path d="M119.2 80.8L88.9 91.7"/><path d="M119.2 80.8L128.1 92.8"/><path d="M119.2 80.8L97.5 110.7"/><path d="M119.2 80.8L119.8 114.0"/><path d="M22.3 92.8L36.4 89.9"/><path d="M22.3 92.8L45.5 109.0"/><path d="M22.3 92.8L13.7 114.0"/><path d="M22.3 92.8L6.5 129.6"/><path d="M36.4 89.9L74.3 94.5"/><path d="M36.4 89.9L45.5 109.0"/><path d="M36.4 89.9L13.7 114.0"/><path d="M36.4 89.9L65.7 115.9"/><path d="M36.4 89.9L36.4 132.2"/><path d="M74.3 94.5L88.9 91.7"/><path d="M74.3 94.5L65.7 115.9"/><path d="M74.3 94.5L97.5 110.7"/><path d="M74.3 94.5L58.1 131.8"/><path d="M74.3 94.5L88.4 133.9"/><path d="M88.9 91.7L128.1 92.8"/><path d="M88.9 91.7L45.5 109.0"/><path d="M88.9 91.7L65.7 115.9"/><path d="M88.9 91.7L97.5 110.7"/><path d="M88.9 91.7L119.8 114.0"/><path d="M88.9 91.7L88.4 133.9"/><path d="M88.9 91.7L112.7 130.0"/><path d="M128.1 92.8L97.5 110.7"/><path d="M128.1 92.8L119.8 114.0"/><path d="M128.1 92.8L112.7 130.0"/><path d="M45.5 109.0L13.7 114.0"/><path d="M45.5 109.0L65.7 115.9"/><path d="M45.5 109.0L36.4 132.2"/><path d="M45.5 109.0L58.1 131.8"/><path d="M45.5 109.0L15.2 145.4"/><path d="M45.5 109.0L67.2 147.4"/><path d="M45.5 109.0L36.4 153.4"/><path d="M13.7 114.0L6.5 129.6"/><path d="M13.7 114.0L36.4 132.2"/><path d="M13.7 114.0L15.2 145.4"/><path d="M13.7 114.0L36.4 153.4"/><path d="M65.7 115.9L97.5 110.7"/><path d="M65.7 115.9L36.4 132.2"/><path d="M65.7 115.9L58.1 131.8"/><path d="M65.7 115.9L88.4 133.9"/><path d="M65.7 115.9L67.2 147.4"/><path d="M65.7 115.9L36.4 153.4"/><path d="M65.7 115.9L88.4 154.9"/><path d="M97.5 110.7L58.1 131.8"/><path d="M97.5 110.7L88.4 133.9"/><path d="M97.5 110.7L112.7 130.0"/><path d="M97.5 110.7L67.2 147.4"/><path d="M97.5 110.7L88.4 154.9"/><path d="M6.5 129.6L36.4 132.2"/><path d="M6.5 129.6L15.2 145.4"/><path d="M6.5 129.6L36.4 153.4"/><path d="M36.4 132.2L58.1 131.8"/><path d="M36.4 132.2L15.2 145.4"/><path d="M36.4 132.2L67.2 147.4"/><path d="M36.4 132.2L36.4 153.4"/><path d="M58.1 131.8L88.4 133.9"/><path d="M58.1 131.8L15.2 145.4"/><path d="M58.1 131.8L67.2 147.4"/><path d="M88.4 133.9L112.7 130.0"/><path d="M88.4 133.9L67.2 147.4"/><path d="M88.4 133.9L88.4 154.9"/><path d="M112.7 130.0L88.4 154.9"/><path d="M15.2 145.4L36.4 153.4"/><path d="M67.2 147.4L36.4 153.4"/><path d="M67.2 147.4L88.4 154.9"/></g>
<circle cx="11.1" cy="44.7" r="1.250" fill="#111"/><circle cx="63.5" cy="46.2" r="1.250" fill="#111"/><circle cx="117.0" cy="44.7" r="1.250" fill="#111"/><circle cx="8.3" cy="56.1" r="1.250" fill="#111"/><circle cx="34.7" cy="55.5" r="1.250" fill="#111"/><circle cx="60.7" cy="57.7" r="1.250" fill="#111"/><circle cx="86.7" cy="57.0" r="1.250" fill="#111"/><circle cx="114.4" cy="56.1" r="1.250" fill="#111"/><circle cx="141.1" cy="55.5" r="1.250" fill="#111"/><circle cx="36.9" cy="76.5" r="1.250" fill="#111"/><circle cx="45.5" cy="76.5" r="1.250" fill="#111"/><circle cx="13.2" cy="80.8" r="1.250" fill="#111"/><circle cx="65.0" cy="82.6" r="1.250" fill="#111"/><circle cx="88.9" cy="78.2" r="1.250" fill="#111"/><circle cx="97.5" cy="78.7" r="1.250" fill="#111"/><circle cx="119.2" cy="80.8" r="1.250" fill="#111"/><circle cx="22.3" cy="92.8" r="1.250" fill="#111"/><circle cx="36.4" cy="89.9" r="1.250" fill="#111"/><circle cx="74.3" cy="94.5" r="1.250" fill="#111"/><circle cx="88.9" cy="91.7" r="1.250" fill="#111"/><circle cx="128.1" cy="92.8" r="1.250" fill="#111"/><circle cx="45.5" cy="109.0" r="1.250" fill="#111"/><circle cx="13.7" cy="114.0" r="1.250" fill="#111"/><circle cx="65.7" cy="115.9" r="1.250" fill="#111"/><circle cx="97.5" cy="110.7" r="1.250" fill="#111"/><circle cx="119.8" cy="114.0" r="1.250" fill="#111"/><circle cx="6.5" cy="129.6" r="1.250" fill="#111"/><circle cx="36.4" cy="132.2" r="1.250" fill="#111"/><circle cx="58.1" cy="131.8" r="1.250" fill="#111"/><circle cx="88.4" cy="133.9" r="1.250" fill="#111"/><circle cx="112.7" cy="130.0" r="1.250" fill="#111"/><circle cx="15.2" cy="145.4" r="1.250" fill="#111"/><circle cx="67.2" cy="147.4" r="1.250" fill="#111"/><circle cx="36.4" cy="153.4" r="1.250" fill="#111"/><circle cx="88.4" cy="154.9" r="1.250" fill="#111"/><circle cx="223.2" cy="42.3" r="1.250" fill="#111"/>
<!-- top right dark blur -->
<ellipse cx="318" cy="8" rx="40" ry="22" fill="#7d7b78" filter="url(#vb3)"/>
<ellipse cx="290" cy="120" rx="40" ry="70" fill="#d6d3cb" filter="url(#vb3)"/>
<!-- emblem -->
<g filter="url(#vb)">
<circle cx="262" cy="41" r="26" fill="#e8dcc0"/>
<circle cx="262" cy="41" r="25" fill="none" stroke="#c9a23a" stroke-width="2"/>
<path d="M236 30c8-5 16-5 24 0v16c-8-4-16-4-24 0z" fill="#2f6fd0"/>
<path d="M236 40c8-4 16-4 24 0v9c-8-4-16-4-24 0z" fill="#f0c828"/>
<ellipse cx="268" cy="34" rx="8" ry="10" fill="#d9cfc4"/>
<path d="M256 56c2-8 8-11 14-11s10 3 12 10l-6 8h-16z" fill="#b9b4b4"/>
<path d="M238 50l8-2v18l-6-2z" fill="#2a59b8"/><path d="M240 58c10 8 20 8 30 2v8c-10 6-20 5-30-2z" fill="#2f6fd0"/>
<rect x="240" y="50" width="8" height="12" fill="#c9a23a"/>
<rect x="259" y="13" width="7" height="8" fill="#3a6fc8"/><rect x="246" y="17" width="6" height="6" fill="#e0b030"/>
</g>
<rect x="272" y="10" width="50" height="70" fill="#d9d6ce" opacity=".75" filter="url(#vb3)"/>
<!-- logo left -->
<g filter="url(#vb)" fill="#d2ac45">
<path d="M12 19c3-8 10-10 21-11c11 1 19 3 22 11c-4 4-8 5-10 5h-24c-3 0-6-1-9-5z" opacity=".9"/>
<rect x="20" y="14" width="27" height="9" fill="#f3ead0"/>
<rect x="23" y="16.500" width="21" height="4" fill="#b99a3a"/>
<rect x="25" y="27" width="16" height="1.500" opacity=".7"/>
<ellipse cx="11" cy="22" rx="4" ry="5"/><ellipse cx="56" cy="22" rx="4" ry="5"/>
</g>
<!-- chair -->
<g filter="url(#vb)">
<path d="M128 128c2-14 10-20 22-20l4 36h-26z" fill="#9b9390"/>
<path d="M226 104c14-8 36-6 44 8c5 10 6 22 6 36l-46 4z" fill="#a39d99"/>
<path d="M236 112c10-5 24-3 30 6l4 30-30 2z" fill="#b4afab"/>
<!-- body -->
<path d="M100 178c6-22 20-32 56-38l58 0c36 6 62 14 78 38z" fill="url(#top)"/>
<path d="M160 134h62l8 6c-2 14-4 26-8 40h-62c-1-16 0-28 0-46z" fill="#c9a8c3"/>
<path d="M150 142l12-6c0 16 0 30 2 44h-40z" fill="#1f2fa8"/>
<path d="M232 142l-8-6c-2 16-4 30-8 44h40z" fill="#1f2fa8"/>
<!-- face -->
<ellipse cx="183" cy="106" rx="37" ry="43" fill="url(#face)"/>
<!-- hair -->
<g filter="url(#hairf)">
<path d="M131 114c-7-28-3-56 22-72c24-14 56-12 76 4c18 15 22 40 13 64c-2 9-7 13-12 11c2-19-2-36-15-46c-14 6-40 6-58-2c-11 8-15 23-15 38c-4 6-9 6-11 3z" fill="#7f3a30"/>
<path d="M144 72c10-20 42-28 68-17c15 6 21 19 21 30c-10-15-25-21-46-19c-17 2-32 6-43 6z" fill="#94493b"/>
<path d="M138 62c6-13 21-22 40-24c-15 8-23 19-27 32z" fill="#672a24"/>
<path d="M205 50c14 4 26 16 28 34c-6-12-16-22-28-26z" fill="#6e2d26"/>
</g>
<path d="M221 116c3-2 7 0 7 6c0 8-4 14-8 14z" fill="#b78aa0"/>
<ellipse cx="222" cy="121" rx="3" ry="5" fill="#3d2560"/>
<!-- glasses -->
<g fill="#a9b4e8" fill-opacity=".55" stroke="#5348cf" stroke-width="2">
<path d="M141 86c10-4 24-4 32 0c2 10-6 20-16 20s-18-8-16-20z"/>
<path d="M180 84c12-6 28-6 36-2c2 12-8 22-18 22s-18-8-18-20z"/>
</g>
<path d="M173 87h7" stroke="#5348cf" stroke-width="2"/>
<ellipse cx="160" cy="93" rx="6" ry="3.500" fill="#4a5590" opacity=".7"/><ellipse cx="198" cy="91" rx="6" ry="3.500" fill="#4a5590" opacity=".7"/>
<path d="M170 106c-2 6 0 10 6 10" fill="none" stroke="#b58aa0" stroke-width="1.500"/>
<!-- lips -->
<ellipse cx="175" cy="129.500" rx="12" ry="5" fill="#8c2352"/>
<path d="M165 128.500c6-1.500 14-1.500 20 0" stroke="#d9a8b8" stroke-width="1.200" fill="none"/>
<!-- bottom right object -->
<path d="M296 160c8-6 16-4 22-2v22h-24z" fill="#a8566a"/>
</g>
<!-- name tag -->
<rect x="0" y="158.500" width="112.500" height="19.500" fill="#2b2b2f" opacity=".82"/>
<g fill="#fff"><rect x="3.300" y="172" width="2.200" height="3.500"/><rect x="7" y="169.500" width="2.200" height="6"/><rect x="10.700" y="166.500" width="2.200" height="9"/><rect x="14.400" y="163" width="2.200" height="12.500"/></g>
</g></svg>
<div class="t" style="left:1342.0px;top:363.2px;font-size:12.5px;color:#e1b233;letter-spacing:0.12px;font-weight:bold;font-family:'Liberation Serif',serif;">Дні Шекспіра в Україні 2024</div>
<div class="t" style="left:1300.5px;top:511.2px;font-size:12.5px;color:#fff;letter-spacing:0.29px;">Nataliya Torkut</div>
<div class="abs" style="left:1270px;top:424px;width:1px;height:26px;background:#9a9a9a;"></div>
<div class="abs" style="left:1273px;top:424px;width:1px;height:26px;background:#9a9a9a;"></div>

<!-- ZTOOL -->

<svg class="abs" style="left:38px;top:803px;" width="26" height="26" viewBox="0 0 26 26"><rect x="9" y="2.500" width="7.500" height="13.500" rx="3.750" fill="#b3b3b3"/><path d="M6 11.500a6.800 6.800 0 0 0 13.600 0" fill="none" stroke="#b3b3b3" stroke-width="1.500"/><path d="M12.800 18.500v4.500M9.500 23.300h6.600" stroke="#b3b3b3" stroke-width="1.500"/><path d="M1.300 24.200l23-22.700" stroke="#e9434d" stroke-width="1.600"/></svg>
<svg class="abs" style="left:85px;top:813.5px;" width="8" height="5" viewBox="0 0 8 5"><path d="M0.800 4.300l3.200-3.300 3.200 3.300" fill="none" stroke="#c8c8c8" stroke-width="1.300"/></svg>
<div class="t" style="left:10.5px;top:833.1px;font-size:12px;color:#d6d6d6;letter-spacing:0.21px;">Включить звук</div>
<svg class="abs" style="left:147.5px;top:808.5px;" width="25" height="15" viewBox="0 0 25 15"><rect x="0" y="0.300" width="17" height="14.200" rx="3.500" fill="#b3b3b3"/><path d="M18 5.500l5.500-3.500q1.500-0.700 1.500 1v8.800q0 1.700-1.500 1l-5.500-3.500z" fill="#b3b3b3"/></svg>
<svg class="abs" style="left:202.8px;top:813.5px;" width="8" height="5" viewBox="0 0 8 5"><path d="M0.800 4.300l3.200-3.300 3.200 3.300" fill="none" stroke="#c8c8c8" stroke-width="1.300"/></svg>
<div class="t" style="left:109.3px;top:833.1px;font-size:12px;color:#d6d6d6;">Остановить видео</div>
<svg class="abs" style="left:421px;top:807.5px;" width="25" height="18" viewBox="0 0 25 18"><circle cx="8" cy="5" r="4.300" fill="#b3b3b3"/><path d="M0 17.500v-2.500c0-3 3.500-5 8-5s8 2 8 5v2.500z" fill="#b3b3b3"/><circle cx="18" cy="6.300" r="3.400" fill="#b3b3b3"/><path d="M17.300 17.500v-3c0-1.500-0.800-2.700-1.800-3.500c0.800-0.200 1.600-0.300 2.500-0.300c4 0 6.500 1.800 6.500 4.300v2.500z" fill="#b3b3b3"/></svg>
<div class="t" style="left:449.6px;top:807.9px;font-size:12px;color:#d6d6d6;transform:scaleX(0.9814);transform-origin:0 50%;">50</div>
<svg class="abs" style="left:481.8px;top:813.8px;" width="8" height="5" viewBox="0 0 8 5"><path d="M0.800 4.300l3.200-3.300 3.200 3.300" fill="none" stroke="#c8c8c8" stroke-width="1.300"/></svg>
<div class="t" style="left:404.4px;top:833.1px;font-size:12px;color:#d6d6d6;">Участники</div>
<svg class="abs" style="left:533px;top:807px;" width="20" height="18.5" viewBox="0 0 20 18.5"><path d="M3.500 0h13a3.500 3.500 0 0 1 3.500 3.500v7a3.500 3.500 0 0 1-3.500 3.500h-7l-5 4.300v-4.300h-1a3.500 3.500 0 0 1-3.500-3.500v-7a3.500 3.500 0 0 1 3.500-3.500z" fill="#b3b3b3"/></svg>
<svg class="abs" style="left:571.8px;top:813.8px;" width="8" height="5" viewBox="0 0 8 5"><path d="M0.800 4.300l3.200-3.300 3.200 3.300" fill="none" stroke="#c8c8c8" stroke-width="1.300"/></svg>
<div class="t" style="left:533.0px;top:833.1px;font-size:12px;color:#d6d6d6;transform:scaleX(0.9696);transform-origin:0 50%;">Чат</div>
<div class="abs" style="left:645px;top:807px;width:24px;height:18px;background:#23d959;border-radius:3.500px"></div>
<svg class="abs" style="left:652px;top:810.5px;" width="10" height="11" viewBox="0 0 10 11"><path d="M5 10.500v-9M1.200 5l3.800-3.800 3.800 3.800" fill="none" stroke="#12351c" stroke-width="1.900"/></svg>
<div class="t" style="left:596.0px;top:833.1px;font-size:12px;color:#23d959;">Демонстрация экрана</div>
<svg class="abs" style="left:757px;top:804.5px;" width="21" height="22" viewBox="0 0 21 22"><path d="M4 0h10l7 7v11.500a3.500 3.500 0 0 1-3.500 3.500h-13.500a3.500 3.500 0 0 1-3.500-3.500v-15a3.500 3.500 0 0 1 3.500-3.500z" fill="#b3b3b3"/><path d="M14 0l7 7h-5a2 2 0 0 1-2-2z" fill="#8a8a8a"/><path d="M9.500 9.500l1.300 3.200 3.200 1.300-3.200 1.300-1.300 3.200-1.300-3.200-3.200-1.300 3.200-1.300z" fill="#1a1a1a"/><path d="M14.800 8.800l0.600 1.400 1.400 0.600-1.400 0.600-0.600 1.400-0.600-1.400-1.400-0.600 1.400-0.600z" fill="#1a1a1a"/></svg>
<div class="t" style="left:747.0px;top:833.1px;font-size:12px;color:#d6d6d6;">Сводка</div>
<div class="abs" style="left:863.5px;top:804px;width:20.5px;height:20px;background:#b3b3b3;border-radius:3px"></div>
<div class="abs" style="left:871px;top:809.5px;width:2px;height:9px;background:#1a1a1a;"></div>
<div class="abs" style="left:875px;top:809.5px;width:2px;height:9px;background:#1a1a1a;"></div>
<div class="abs" style="left:888.5px;top:804px;width:20.5px;height:20px;background:#b3b3b3;border-radius:3px"></div>
<div class="abs" style="left:895px;top:810px;width:7.5px;height:8px;background:#1a1a1a;border-radius:1px"></div>
<div class="t" style="left:815.8px;top:834.9px;font-size:12px;color:#d6d6d6;">Пауза/остановить запись</div>
<svg class="abs" style="left:995px;top:805px;" width="21" height="21" viewBox="0 0 21 21"><circle cx="8.800" cy="11.500" r="8.600" fill="#b3b3b3"/><circle cx="5.800" cy="9.500" r="1.300" fill="#1a1a1a"/><circle cx="11.800" cy="9.500" r="1.300" fill="#1a1a1a"/><path d="M4.500 13.300a4.500 4 0 0 0 8.600 0z" fill="#1a1a1a"/><circle cx="16.500" cy="4" r="4.300" fill="#1a1a1a"/><path d="M16.500 1v6M13.500 4h6" stroke="#b3b3b3" stroke-width="1.300"/></svg>
<svg class="abs" style="left:1028.8px;top:813.8px;" width="8" height="5" viewBox="0 0 8 5"><path d="M0.800 4.300l3.200-3.300 3.200 3.300" fill="none" stroke="#c8c8c8" stroke-width="1.300"/></svg>
<div class="t" style="left:982.7px;top:833.1px;font-size:12px;color:#d6d6d6;transform:scaleX(0.9816);transform-origin:0 50%;">Реакции</div>
<svg class="abs" style="left:1081px;top:809px;" width="17" height="16.5" viewBox="0 0 17 16.5"><path d="M1 6v-2.500a2.500 2.500 0 0 1 2.500-2.500h3.500M16 10v2.500a2.500 2.500 0 0 1-2.500 2.500h-3.500" fill="none" stroke="#b3b3b3" stroke-width="1.500"/><circle cx="13" cy="3.500" r="2.300" fill="none" stroke="#b3b3b3" stroke-width="1.500"/><circle cx="3.700" cy="12.700" r="2.300" fill="none" stroke="#b3b3b3" stroke-width="1.500"/></svg>
<div class="t" style="left:1053.8px;top:833.1px;font-size:12px;color:#d6d6d6;letter-spacing:0.24px;">Приложения</div>
<svg class="abs" style="left:1183px;top:806.5px;" width="21" height="17" viewBox="0 0 21 17"><path d="M6 14h-2.500a2.700 2.700 0 0 1-2.700-2.700v-7.800a2.700 2.700 0 0 1 2.700-2.700h13a2.700 2.700 0 0 1 2.700 2.700v5.500" fill="none" stroke="#b3b3b3" stroke-width="1.500"/><rect x="8.500" y="11.800" width="12" height="4.400" rx="2.200" fill="#b3b3b3"/></svg>
<div class="t" style="left:1142.3px;top:833.1px;font-size:12px;color:#d6d6d6;letter-spacing:0.23px;">Доски сообщений</div>
<svg class="abs" style="left:1293px;top:805.5px;" width="19" height="21" viewBox="0 0 19 21"><path d="M4 17.500a2.500 2.500 0 0 1-1.500-2.300v-11.700a2.700 2.700 0 0 1 2.700-2.700h7.600a2.700 2.700 0 0 1 2.700 2.700v9.500" fill="none" stroke="#b3b3b3" stroke-width="1.500"/><path d="M6 5h7M6 8h7M6 11h4" stroke="#b3b3b3" stroke-width="1.300"/><path d="M0.300 5h2.500M0.300 8.500h2.500M0.300 12h2.500" stroke="#b3b3b3" stroke-width="1.200"/><rect x="6.500" y="15.300" width="12" height="4.700" rx="2.300" fill="#b3b3b3"/></svg>
<div class="t" style="left:1265.5px;top:833.1px;font-size:12px;color:#d6d6d6;letter-spacing:0.16px;">Примечания</div>
<div class="abs" style="left:1526px;top:812.5px;width:62px;height:26px;background:#c3242c;border-radius:6px"></div>
<div class="t" style="left:1537.5px;top:819.2px;font-size:12.5px;color:#fff;transform:scaleX(0.9346);transform-origin:0 50%;font-weight:bold;">Выйти</div>

<!-- TASKBAR -->

<div class="abs" style="left:0px;top:852px;width:1600px;height:48px;background:#ebddd6;"></div>
<div class="abs" style="left:0;top:852px;width:1600px;height:48px;background:linear-gradient(90deg,rgba(238,225,218,1) 0%,rgba(234,219,211,1) 30%,rgba(236,223,216,1) 60%,rgba(235,221,214,1) 100%)"></div>
<svg class="abs" style="left:18px;top:861px;" width="27" height="25" viewBox="0 0 27 25"><defs><radialGradient id="sun" cx="0.400" cy="0.400" r="0.700"><stop offset="0" stop-color="#ffc23a"/><stop offset="1" stop-color="#f08a12"/></radialGradient><linearGradient id="cl" x1="0" y1="0" x2="0" y2="1"><stop offset="0" stop-color="#e4eefc"/><stop offset="1" stop-color="#8fb6ee"/></linearGradient></defs><circle cx="13" cy="13.500" r="10" fill="url(#sun)"/><path d="M3.500 10.500a3 3 0 0 1 1.200-5.500a4.500 4.500 0 0 1 8 0.500a2.600 2.600 0 0 1 0.300 5z" fill="url(#cl)"/><path d="M13.500 22.500a3 3 0 0 1 0.500-5.500a4.500 4.500 0 0 1 8-0.300a3 3 0 0 1 1 5.800z" fill="url(#cl)"/></svg>
<div class="t" style="left:50.5px;top:862.4px;font-size:12px;color:#1f1f1f;transform:scaleX(0.9137);transform-origin:0 50%;">20°C</div>
<div class="t" style="left:50.5px;top:877.6px;font-size:12px;color:#555;transform:scaleX(0.9768);transform-origin:0 50%;">Partly sunny</div>
<svg class="abs" style="left:434.5px;top:865px;" width="23.5" height="23" viewBox="0 0 23.5 23"><defs><linearGradient id="wl" x1="0" y1="0" x2="1" y2="1"><stop offset="0" stop-color="#55c8ff"/><stop offset="1" stop-color="#0b78d4"/></linearGradient></defs><g fill="url(#wl)"><rect x="0" y="0" width="11" height="10.800"/><rect x="12.500" y="0" width="11" height="10.800"/><rect x="0" y="12.200" width="11" height="10.800"/><rect x="12.500" y="12.200" width="11" height="10.800"/></g></svg>
<div class="abs" style="left:471.5px;top:860.5px;width:218.5px;height:31px;background:#f8f3f0;border-radius:15.500px;border:1px solid #e2d6ce"></div>
<svg class="abs" style="left:483px;top:869.5px;" width="14" height="14" viewBox="0 0 14 14"><circle cx="5.800" cy="5.800" r="4.800" fill="none" stroke="#222" stroke-width="1.500"/><path d="M9.300 9.300l4 4" stroke="#222" stroke-width="1.700"/></svg>
<div class="t" style="left:508.0px;top:869.7px;font-size:14px;color:#5a5a5a;letter-spacing:0.18px;">Поиск</div>
<svg class="abs" style="left:702.5px;top:865px;" width="25" height="22" viewBox="0 0 25 22"><defs><linearGradient id="tv1" x1="0" y1="0" x2="1" y2="1"><stop offset="0" stop-color="#ffffff"/><stop offset="1" stop-color="#dcdcdc"/></linearGradient><linearGradient id="tv2" x1="0" y1="0" x2="1" y2="1"><stop offset="0" stop-color="#9c9c9c"/><stop offset="1" stop-color="#cfcfcf"/></linearGradient></defs><rect x="6.800" y="0" width="17.500" height="15.400" rx="1.300" fill="url(#tv1)"/><rect x="0.400" y="6" width="18" height="15.800" rx="1.300" fill="#232323"/><path d="M6.800 6h11.600v9.400h-11.600z" fill="url(#tv2)"/></svg>
<svg class="abs" style="left:747px;top:864px;" width="24" height="24" viewBox="0 0 24 24"><defs><linearGradient id="eg1" x1="0.100" y1="0.200" x2="0.700" y2="1"><stop offset="0" stop-color="#2aa4e6"/><stop offset="1" stop-color="#0f5cb0"/></linearGradient><linearGradient id="eg2" x1="0" y1="0.300" x2="1" y2="0.500"><stop offset="0" stop-color="#2fbfe8"/><stop offset="0.550" stop-color="#3fd0a0"/><stop offset="1" stop-color="#74dc45"/></linearGradient><linearGradient id="eg3" x1="0" y1="0" x2="1" y2="1"><stop offset="0" stop-color="#1a78c8"/><stop offset="1" stop-color="#0b4796"/></linearGradient><clipPath id="egc"><circle cx="12" cy="12" r="12"/></clipPath></defs><g clip-path="url(#egc)"><rect width="24" height="24" fill="url(#eg1)"/><path d="M5.500 14c0-4 2.800-6.800 6.500-7c-1.500 1-2.300 2.800-2.300 4.800c0 4.200 3.800 7.700 8.800 7.700c1.800 0 3.500-0.500 5-1.300v6h-12c-4 0-6-5-6-10.200z" fill="url(#eg3)"/><path d="M-1 16c0.400-6 5-10.200 10.500-10.200c3.500 0 5.500 2.200 5.500 4.700c0 1.500-1 2-1 3.200c0 1.800 1.800 3 4.300 3c3.200 0 5.700-2.500 5.700-5.700v-12h-25z" fill="url(#eg2)"/><path d="M15 10.500c0 1.500-1 2-1 3.200c0 1.800 1.800 3 4.300 3c2 0 3.800-1 4.800-2.500l2 2.500c-2 2-4.500 2.800-6.800 2.800c-5 0-8.600-3.500-8.600-7.700c0-2 0.800-3.800 2.300-4.800c1.800 0.200 3 1.700 3 3.500z" fill="#ebddd6"/></g></svg>
<div class="abs" style="left:755.3px;top:892px;width:7px;height:3px;background:#8a8a8a;border-radius:1.500px"></div>
<svg class="abs" style="left:791px;top:865.5px;" width="24" height="21" viewBox="0 0 24 21"><defs><linearGradient id="fg" x1="0" y1="0" x2="0" y2="1"><stop offset="0" stop-color="#fdd961"/><stop offset="1" stop-color="#f7b71d"/></linearGradient></defs><path d="M0 1.500a1.500 1.500 0 0 1 1.500-1.500h6.500l2 2.300h-10z" fill="#e6a20e"/><path d="M0 2.300h22.500a1.500 1.500 0 0 1 1.500 1.500v15.700a1.500 1.500 0 0 1-1.500 1.500h-21a1.500 1.500 0 0 1-1.500-1.500z" fill="url(#fg)"/><path d="M4.500 21v-4.500a2 2 0 0 1 2-2h11a2 2 0 0 1 2 2v4.500z" fill="#1c7fdc"/><path d="M8 17.700h8" stroke="#1462b4" stroke-width="1.200"/></svg>
<svg class="abs" style="left:835px;top:864.5px;" width="24.2" height="22.5" viewBox="0 0 24.2 22.5"><path d="M0 8l12.100-8 12.100 8z" fill="#0f62ba"/><path d="M0 8h24.200v14.500h-24.200z" fill="#2cb0f0"/><path d="M3.500 8h17.200l-8.600 6.500z" fill="#f4f4f4"/><path d="M5 9.500h14.200l-7.100 5z" fill="#d8d8d8" opacity=".5"/><path d="M0 8l12.100 8.200 12.100-8.200v14.500h-24.200z" fill="#2aaaf0"/><path d="M24.200 8v14.500h-24.200z" fill="#1c8ede" opacity=".75"/></svg>
<svg class="abs" style="left:879px;top:863.5px;" width="25" height="25" viewBox="0 0 25 25"><defs><linearGradient id="wps" x1="0" y1="0" x2="0" y2="1"><stop offset="0" stop-color="#ff5a2a"/><stop offset="1" stop-color="#e8200f"/></linearGradient></defs><circle cx="12.500" cy="12.500" r="12" fill="url(#wps)"/><path d="M5.300 8.300h14.400M6 8.300l3.300 8.700 3.200-6.500 3.200 6.500 3.300-8.700" fill="none" stroke="#fff" stroke-width="2.100" stroke-linejoin="miter"/></svg>
<svg class="abs" style="left:923px;top:864px;" width="25" height="24" viewBox="0 0 25 24"><circle cx="17.500" cy="5.500" r="3.600" fill="#7b83eb"/><circle cx="22.800" cy="7" r="2.300" fill="#5059c9"/><path d="M12 9.500h10a1.500 1.500 0 0 1 1.500 1.500v7a6 6 0 0 1-11.500 1z" fill="#7b83eb"/><path d="M20 10h4a1 1 0 0 1 1 1v5a3.500 3.500 0 0 1-5 2.500z" fill="#5059c9"/><rect x="0" y="5.500" width="14" height="14" rx="1.500" fill="#fff" stroke="#d8d8f0" stroke-width="0.500"/><path d="M3.500 9h7v2.200h-2.300v6h-2.400v-6h-2.300z" fill="#4b53bc"/></svg>
<svg class="abs" style="left:967px;top:863.8px;" width="24" height="24" viewBox="0 0 24 24"><path d="M1.610 6A12 12 0 0 1 22.390 6L12 6.400A5.600 5.600 0 0 0 7.150 14.800Z" fill="#e94235"/><path d="M22.390 6A12 12 0 0 1 12 24L16.850 14.800A5.600 5.600 0 0 0 12 6.400Z" fill="#fbbc04"/><path d="M12 24A12 12 0 0 1 1.610 6L7.150 14.800A5.600 5.600 0 0 0 16.850 14.800Z" fill="#31a350"/><circle cx="12" cy="12" r="5.600" fill="#fff"/><circle cx="12" cy="12" r="4.400" fill="#4285f4"/></svg>
<svg class="abs" style="left:979.5px;top:859px;" width="16" height="16" viewBox="0 0 16 16"><defs><clipPath id="avc"><circle cx="8" cy="8" r="8"/></clipPath></defs><g clip-path="url(#avc)"><rect width="16" height="16" fill="#9aa0a8"/><rect y="0" width="16" height="6" fill="#c4ccd6"/><rect x="3" y="5" width="10" height="5" fill="#6a6460"/><rect x="0" y="10" width="16" height="6" fill="#7d8a90"/><rect x="6" y="4" width="3" height="6" fill="#e8e4e0"/></g><circle cx="8" cy="8" r="7.600" fill="none" stroke="#d8d4d0" stroke-width="0.800"/></svg>
<div class="abs" style="left:975.0px;top:892px;width:7px;height:3px;background:#8a8a8a;border-radius:1.500px"></div>
<svg class="abs" style="left:1010.5px;top:864px;" width="24" height="24" viewBox="0 0 24 24"><defs><linearGradient id="sk" x1="0" y1="0" x2="1" y2="1"><stop offset="0" stop-color="#1fb6f2"/><stop offset="1" stop-color="#0a86d6"/></linearGradient></defs><circle cx="12" cy="12" r="10.500" fill="url(#sk)"/><circle cx="6.500" cy="6.500" r="5.500" fill="#18aef0"/><circle cx="17.500" cy="17.500" r="5.500" fill="#0c8cdc"/><text x="12" y="17.300" font-family="Liberation Sans" font-weight="bold" font-size="15" fill="#fff" text-anchor="middle">S</text></svg>
<div class="abs" style="left:1019.5px;top:892px;width:7px;height:3px;background:#8a8a8a;border-radius:1.500px"></div>
<svg class="abs" style="left:1055px;top:863.8px;" width="24" height="24" viewBox="0 0 24 24"><path d="M1.610 6A12 12 0 0 1 22.390 6L12 6.400A5.600 5.600 0 0 0 7.150 14.800Z" fill="#e94235"/><path d="M22.390 6A12 12 0 0 1 12 24L16.850 14.800A5.600 5.600 0 0 0 12 6.400Z" fill="#fbbc04"/><path d="M12 24A12 12 0 0 1 1.610 6L7.150 14.800A5.600 5.600 0 0 0 16.850 14.800Z" fill="#31a350"/><circle cx="12" cy="12" r="5.600" fill="#fff"/><circle cx="12" cy="12" r="4.400" fill="#4285f4"/></svg>
<div class="abs" style="left:1063.5px;top:892px;width:7px;height:3px;background:#8a8a8a;border-radius:1.500px"></div>
<div class="abs" style="left:1092px;top:857px;width:34.5px;height:38px;background:#f6eee9;border-radius:4px;border:1px solid #e8dcd4"></div>
<div class="abs" style="left:1127.5px;top:858px;width:2px;height:36px;background:#f3e9e3;border-radius:0 3px 3px 0"></div>
<svg class="abs" style="left:1098px;top:863.8px;" width="24" height="24" viewBox="0 0 24 24"><defs><linearGradient id="zmg" x1="0" y1="0" x2="0" y2="1"><stop offset="0" stop-color="#1a6cff"/><stop offset="1" stop-color="#0848e8"/></linearGradient></defs><circle cx="12" cy="12" r="12" fill="url(#zmg)"/><text x="12" y="15.700" font-family="Liberation Sans" font-size="13.500" fill="#fff" stroke="#fff" stroke-width="0.350" text-anchor="middle" letter-spacing="-0.200">zm</text></svg>
<div class="abs" style="left:1102.5px;top:892px;width:16.5px;height:3px;background:#0c6fd6;border-radius:1.500px"></div>
<svg class="abs" style="left:1143.5px;top:866px;" width="23" height="18" viewBox="0 0 23 18"><defs><linearGradient id="mt1" x1="0" y1="0" x2="1" y2="1"><stop offset="0" stop-color="#a08cf4"/><stop offset="1" stop-color="#7459e2"/></linearGradient><linearGradient id="mt2" x1="0" y1="0" x2="1" y2="1"><stop offset="0" stop-color="#6a4ee0"/><stop offset="1" stop-color="#4f37c4"/></linearGradient></defs><circle cx="15.700" cy="2.900" r="2.700" fill="#f8a61c"/><path d="M0.500 17l6.500-10.500c0.700-1.100 2-1.100 2.700 0l6.300 10.500z" fill="url(#mt1)"/><path d="M9.500 17l5-8.300c0.600-1 1.900-1 2.500 0l5 8.300z" fill="url(#mt2)"/><path d="M8 17l3.800-5.500 3.200 5.500z" fill="#8f78ee" opacity=".8"/></svg>
<div class="abs" style="left:1151.3px;top:892px;width:7px;height:3px;background:#8a8a8a;border-radius:1.500px"></div>
<svg class="abs" style="left:1242px;top:873px;" width="11" height="6.5" viewBox="0 0 11 6.5"><path d="M0.800 5.800l4.700-4.800 4.700 4.800" fill="none" stroke="#222" stroke-width="1.400"/></svg>
<svg class="abs" style="left:1270.5px;top:867px;" width="18" height="18" viewBox="0 0 18 18"><path d="M1.500 8.500a7 7 0 0 1 12.300-4.200M15 10a7 7 0 0 1-11.800 4" fill="none" stroke="#1d1d1d" stroke-width="1.150"/><path d="M14.200 0.800v3.800h-3.800M2.600 17.200v-3.800h3.800" fill="none" stroke="#1d1d1d" stroke-width="1.150"/><circle cx="12.600" cy="13.600" r="3.900" fill="#f8981d"/></svg>
<svg class="abs" style="left:1305px;top:868.5px;" width="12" height="15" viewBox="0 0 12 15"><rect x="3.700" y="0.600" width="4.600" height="9" rx="2.300" fill="none" stroke="#2c62c0" stroke-width="1.250"/><path d="M1 7a5 5 0 0 0 10 0M6 12v2.500" fill="none" stroke="#2c62c0" stroke-width="1.250"/></svg>
<div class="t" style="left:1339.5px;top:871.9px;font-size:11.5px;color:#222;transform:scaleX(0.9181);transform-origin:0 50%;">УКР</div>
<svg class="abs" style="left:1379.5px;top:870.5px;" width="15.5" height="11.5" viewBox="0 0 15.5 11.5"><path d="M0.800 4.500a9.800 9.800 0 0 1 14 0" fill="none" stroke="#b8aea8" stroke-width="1.200"/><path d="M3 6.800a6.700 6.700 0 0 1 9.600 0M5.200 9a3.600 3.600 0 0 1 5.200 0" fill="none" stroke="#1d1d1d" stroke-width="1.450"/><circle cx="7.800" cy="10.500" r="1" fill="#222"/></svg>
<svg class="abs" style="left:1403px;top:869.5px;" width="16.5" height="13" viewBox="0 0 16.5 13"><path d="M0.700 4.500h2.500l3.500-3.300v10.600l-3.500-3.300h-2.500z" fill="none" stroke="#222" stroke-width="1.100" stroke-linejoin="round"/><path d="M9 4a3.500 3.500 0 0 1 0 5M11 2.200a6 6 0 0 1 0 8.600M13.200 0.500a8.500 8.500 0 0 1 0 12" fill="none" stroke="#222" stroke-width="1.100"/></svg>
<svg class="abs" style="left:1426.5px;top:869px;" width="17" height="13" viewBox="0 0 17 13"><rect x="1.600" y="3.600" width="12.400" height="8.300" rx="2" fill="none" stroke="#1d1d1d" stroke-width="1.100"/><rect x="3.200" y="5.200" width="9.200" height="5.100" rx="0.800" fill="#1d1d1d"/><rect x="14.600" y="6.300" width="1.700" height="3" rx="0.800" fill="#1d1d1d"/><path d="M3.800 0.300l-2.300 3.600h2.800" fill="none" stroke="#1d1d1d" stroke-width="1.100"/><path d="M0.300 6.500h2" stroke="#ebddd6" stroke-width="2.500"/><path d="M2 3.800l-1.200 3.200" stroke="#1d1d1d" stroke-width="1.100"/></svg>
<div class="t" style="left:1488.4px;top:862.6px;font-size:12px;color:#222;transform:scaleX(0.9815);transform-origin:0 50%;">20:11</div>
<div class="t" style="left:1459.4px;top:878.6px;font-size:12px;color:#222;transform:scaleX(0.9590);transform-origin:0 50%;">01.05.2024</div>
<svg class="abs" style="left:1525.5px;top:868.5px;" width="15" height="15" viewBox="0 0 15 15"><path d="M0.600 11.800c1.600-1.200 2.100-2.600 2.100-5.300a4.300 4.300 0 0 1 6-4.100M11.100 6.800c0 2.100 0.500 3.700 1.900 5h-12.400" fill="none" stroke="#1a1a1a" stroke-width="1.200" stroke-linejoin="round"/><path d="M5.100 13.100a1.900 1.900 0 0 0 3.500 0" fill="none" stroke="#1a1a1a" stroke-width="1.100"/><path d="M5 5h3l-3 3.100h3.100" fill="none" stroke="#1a1a1a" stroke-width="1.200"/><path d="M10.200 0.800h3.100l-3.100 3.800h3.200" fill="none" stroke="#1a1a1a" stroke-width="1.200"/></svg>
<svg class="abs" style="left:1556.5px;top:865px;" width="24" height="23" viewBox="0 0 24 23"><defs><linearGradient id="cp1" x1="0" y1="0" x2="0" y2="1"><stop offset="0" stop-color="#18a4f2"/><stop offset="0.350" stop-color="#25b0d8"/><stop offset="0.650" stop-color="#62c04a"/><stop offset="1" stop-color="#f4d20c"/></linearGradient><linearGradient id="cp2" x1="1" y1="0" x2="0" y2="1"><stop offset="0" stop-color="#9a50f8"/><stop offset="0.550" stop-color="#e850b0"/><stop offset="1" stop-color="#f8703a"/></linearGradient></defs><path d="M12.500 0.500h5c1 0 1.500 0.500 1.800 1.500l1.200 3.800h-5.500z" fill="#0b50d6"/><path d="M5 0.400h9.500c1.500 0 1.800 1 1.400 2.200l-3.600 11c-0.500 1.500-1.500 2.200-3 2.200h-6c-2 0-3-1.200-2.400-3l2.400-9.800c0.400-1.700 0.800-2.600 1.700-2.600z" fill="url(#cp1)"/><path d="M15.300 5.800h6c1.800 0 2.500 1.200 2 3l-1.700 5c-0.500 1.500-1.500 2-3 2h-8l1.700-1.500z" fill="url(#cp2)"/><path d="M14 6.500l-3.500 9h1.500l3.300-9.500z" fill="#f4efec"/><rect x="5.500" y="16.100" width="18" height="6.700" rx="1.800" fill="#ffc800"/><text x="14.500" y="21.700" font-family="Liberation Sans" font-weight="bold" font-size="6.300" fill="#1a1a1a" text-anchor="middle" letter-spacing="0.300">PRE</text></svg>
</div>
</body>
</html>
